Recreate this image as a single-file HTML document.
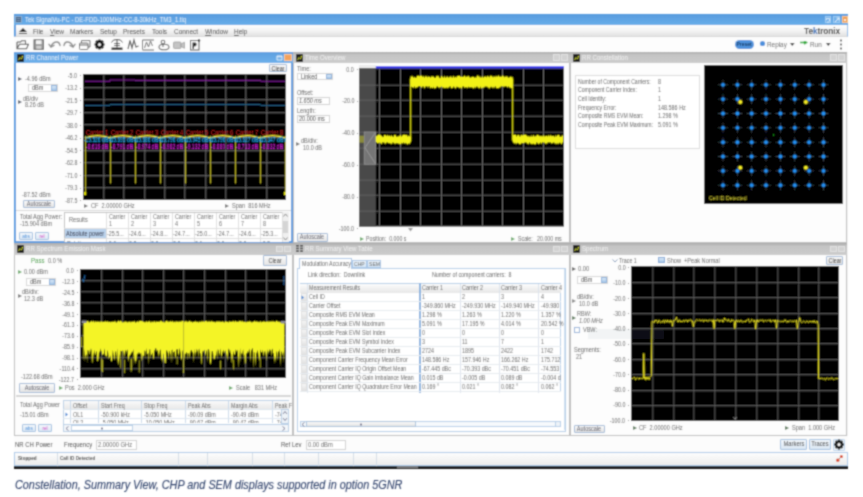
<!DOCTYPE html><html><head><meta charset="utf-8"><style>
html,body{margin:0;padding:0;background:#fff;width:863px;height:497px;overflow:hidden;position:relative;font-family:"Liberation Sans",sans-serif;}
.t{position:absolute;white-space:nowrap;}
div{box-sizing:border-box;}
svg{overflow:hidden;}
#root{position:absolute;left:0;top:0;width:863px;height:497px;filter:url(#bl);}
</style></head><body><svg width="0" height="0" style="position:absolute;left:0;top:0"><filter id="bl" x="0" y="0" width="863" height="497" filterUnits="userSpaceOnUse"><feConvolveMatrix order="5" kernelMatrix="0.0001 0.0020 0.0055 0.0020 0.0001 0.0020 0.0422 0.1171 0.0422 0.0020 0.0055 0.1171 0.3248 0.1171 0.0055 0.0020 0.0422 0.1171 0.0422 0.0020 0.0001 0.0020 0.0055 0.0020 0.0001" edgeMode="duplicate"/></filter></svg><div id="root">
<div style="position:absolute;left:14px;top:14px;width:834px;height:455px;background:#f3f3f3;"></div>
<div style="position:absolute;left:14px;top:14px;width:834px;height:11px;background:linear-gradient(#579ade,#68afe9);"></div>
<div class="t" style="left:24.5px;top:14.5px;font-size:7px;line-height:10px;color:#eef5fc;transform-origin:0 50%;transform:scaleX(0.85);">Tek SignalVu-PC - DE-FDD-100MHz-CC-8-30kHz_TM3_1.tiq</div>
<svg style="position:absolute;left:15px;top:15.5px;" width="7" height="7" viewBox="0 0 7 7"><rect x="0.5" y="0.5" width="6" height="6" fill="#3c5c80" stroke="#9ab8d8" stroke-width="0.8"/><path d="M1.5 2.5 H5.5 M1.5 4.5 H5.5" stroke="#a8c0d8" stroke-width="0.6"/></svg>
<div style="position:absolute;left:824.5px;top:15.7px;width:6.5px;height:7.3px;background:#70b0ea;border:1px solid #9ccaf2;"></div>
<svg style="position:absolute;left:825px;top:16.5px;" width="6" height="6" viewBox="0 0 6 6"><path d="M1.5 1.5 H4.5 V4.5 M1.5 1.5 V3 M2 5 H4" stroke="#e8f4fd" stroke-width="0.8" fill="none"/></svg>
<div style="position:absolute;left:833px;top:15.7px;width:6.5px;height:7.3px;background:#70b0ea;border:1px solid #9ccaf2;"></div>
<svg style="position:absolute;left:833.5px;top:16.5px;" width="6" height="6" viewBox="0 0 6 6"><path d="M1 5 L5 1 M2.5 1 H5 V3.5" stroke="#e8f4fd" stroke-width="0.9" fill="none"/></svg>
<div style="position:absolute;left:841.5px;top:15.7px;width:6.5px;height:7.3px;background:#f09c50;border:1px solid #f7c890;"></div>
<svg style="position:absolute;left:842px;top:16.5px;" width="6" height="6" viewBox="0 0 6 6"><rect x="2" y="2" width="2" height="2" fill="#fde8d0"/></svg>
<div style="position:absolute;left:14px;top:25px;width:834px;height:12px;background:linear-gradient(#fefefe,#f4f4f4 50%,#e2e2e2);border-left:2px solid #5a9de0;border-right:1px solid #8fbbe8;border-bottom:1px solid #d8d8d8;"></div>
<svg style="position:absolute;left:19px;top:28px;" width="8" height="6" viewBox="0 0 8 6"><path d="M0 4 L4 0 L8 4 Z M0 5 H8 V6 H0 Z" fill="#222"/></svg>
<div class="t" style="left:33.3px;top:25.5px;font-size:7.6px;line-height:11px;color:#454545;transform-origin:0 50%;transform:scaleX(0.85);">File</div>
<div class="t" style="left:49.5px;top:25.5px;font-size:7.6px;line-height:11px;color:#454545;transform-origin:0 50%;transform:scaleX(0.85);"><u>V</u>iew</div>
<div class="t" style="left:70px;top:25.5px;font-size:7.6px;line-height:11px;color:#454545;transform-origin:0 50%;transform:scaleX(0.85);">Markers</div>
<div class="t" style="left:100px;top:25.5px;font-size:7.6px;line-height:11px;color:#454545;transform-origin:0 50%;transform:scaleX(0.85);">Setup</div>
<div class="t" style="left:123px;top:25.5px;font-size:7.6px;line-height:11px;color:#454545;transform-origin:0 50%;transform:scaleX(0.85);">Presets</div>
<div class="t" style="left:152.3px;top:25.5px;font-size:7.6px;line-height:11px;color:#454545;transform-origin:0 50%;transform:scaleX(0.85);">Tools</div>
<div class="t" style="left:174.4px;top:25.5px;font-size:7.6px;line-height:11px;color:#454545;transform-origin:0 50%;transform:scaleX(0.85);">Connect</div>
<div class="t" style="left:204.5px;top:25.5px;font-size:7.6px;line-height:11px;color:#454545;transform-origin:0 50%;transform:scaleX(0.85);"><u>W</u>indow</div>
<div class="t" style="left:234px;top:25.5px;font-size:7.6px;line-height:11px;color:#454545;transform-origin:0 50%;transform:scaleX(0.85);"><u>H</u>elp</div>
<div class="t" style="right:23.5px;top:25.3px;font-size:9px;line-height:12px;color:#3a3a3a;text-align:right;transform-origin:100% 50%;transform:scaleX(0.92);font-weight:bold;letter-spacing:-0.1px;">Te<span style="color:#3b6fb6">k</span>tronix</div>
<div style="position:absolute;left:14px;top:37px;width:834px;height:15px;background:#fdfdfd;"></div>
<svg style="position:absolute;left:14px;top:37px;" width="200" height="15" viewBox="0 0 200 15">
<g fill="none" stroke="#555" stroke-width="1.1" stroke-linejoin="round">
<path d="M3 5 V11.8 H12.5 L14.5 7.2 H5.5 L3 11.8 M3 5 H6.5 L7.5 3.8 H11.5 V7.2"/>
</g>
<rect x="20" y="2.8" width="9.5" height="9.5" fill="#9a9a9a" stroke="#555" stroke-width="0.9"/><rect x="22" y="3.3" width="5.5" height="3.8" fill="#f4f4f4"/><rect x="22.3" y="8.8" width="5" height="3" fill="#d0d0d0"/>
<g fill="none" stroke="#8a8a8a" stroke-width="1.4" stroke-linecap="round">
<path d="M37 9.5 Q39 4.5 43.5 5 Q45.5 5.5 46 8.5"/><path d="M35 7.3 L37 10 L40 8.3"/>
<path d="M59 9.5 Q57 4.5 52.5 5 Q50.5 5.5 50 8.5"/><path d="M61 7.3 L59 10 L56 8.3"/>
</g>
<g fill="none" stroke="#666" stroke-width="1"><rect x="65.5" y="6" width="8.5" height="6.5" rx="1"/><path d="M67.5 6 V3.5 H76 V10 H74"/><path d="M65.5 8 H74"/></g>
<g transform="translate(85.5,7.5)"><circle r="3.2" fill="none" stroke="#111" stroke-width="2.4"/>
<g stroke="#111" stroke-width="2.2"><path d="M0 -5 V5 M-5 0 H5 M-3.6 -3.6 L3.6 3.6 M-3.6 3.6 L3.6 -3.6"/></g><circle r="1.5" fill="#fff"/></g>
<g fill="none" stroke="#444" stroke-width="1"><path d="M97.5 5.5 Q99 2 103 2.5 M108.5 5.5 Q107 2 103 2.5 M103 3 V10.5 M100 6.5 H106 M100 8.5 H106"/></g><rect x="97.5" y="10.5" width="11" height="2.5" fill="#333"/>
<path d="M114 12 L116 3.5 L118 11 L120 3 L122 10 L124.5 9" fill="none" stroke="#555" stroke-width="1.1"/>
<path d="M128.5 12.5 V3 H140 M130.5 11 L132.5 5 L134.5 10 L136.5 4 L138.5 9 M128.5 13 H140" fill="none" stroke="#666" stroke-width="1"/>
<g fill="none" stroke="#666" stroke-width="1.1"><ellipse cx="150" cy="10" rx="5" ry="2.8"/><circle cx="149" cy="5" r="1.8"/><path d="M149 7 V10"/></g>
<g fill="#c4c4c4" stroke="#999" stroke-width="0.8"><rect x="159.5" y="5" width="7.5" height="6.5" rx="1"/><path d="M167 7 L170.5 5.2 V11.3 L167 9.5 Z"/></g>
<rect x="176.5" y="3.5" width="8.5" height="9.5" fill="none" stroke="#555" stroke-width="1"/><path d="M178.5 5.5 H181.5 Q183 6 182.6 8 Q182 9.5 180 9.5 V11.8 H178.5 Z" fill="#222"/><circle cx="185" cy="3.5" r="1.2" fill="#222"/>
</svg>
<div style="position:absolute;left:734.5px;top:39.8px;width:19px;height:9.2px;background:#4f92dc;border-radius:5px;"></div>
<div class="t" style="left:684px;width:120px;text-align:center;top:39.9px;font-size:5.8px;line-height:9px;color:#163a66;transform-origin:50% 50%;transform:scaleX(0.85);font-weight:bold;">Preset</div>
<svg style="position:absolute;left:759px;top:40px;" width="7" height="7" viewBox="0 0 7 7"><circle cx="3.5" cy="3.5" r="2.6" fill="#4a8fdc"/></svg>
<div class="t" style="left:767px;top:39.5px;font-size:7.5px;line-height:10px;color:#666;transform-origin:0 50%;transform:scaleX(0.85);">Replay</div>
<svg style="position:absolute;left:790px;top:43px;" width="5" height="4" viewBox="0 0 5 4"><path d="M0 0 H4.6 L2.3 3 Z" fill="#333"/></svg>
<svg style="position:absolute;left:800px;top:41px;" width="8" height="5" viewBox="0 0 8 5"><path d="M0 1.5 H6 M4 0 L6.5 1.5 L4 3" stroke="#22aa33" stroke-width="1.6" fill="none"/></svg>
<div class="t" style="left:810px;top:39.7px;font-size:7.5px;line-height:10px;color:#666;transform-origin:0 50%;transform:scaleX(0.85);">Run</div>
<svg style="position:absolute;left:825.5px;top:43px;" width="5" height="4" viewBox="0 0 5 4"><path d="M0 0 H4.6 L2.3 3 Z" fill="#333"/></svg>
<svg style="position:absolute;left:839px;top:39px;" width="4" height="11" viewBox="0 0 4 11"><circle cx="2" cy="1.5" r="1" fill="#333"/><circle cx="2" cy="5.5" r="1" fill="#333"/><circle cx="2" cy="9.5" r="1" fill="#333"/></svg>
<div style="position:absolute;left:14px;top:51.7px;width:279px;height:191.8px;background:#fdfdfd;border:2px solid #5a9de0;border-top:0;"></div>
<div style="position:absolute;left:14px;top:51.7px;width:279px;height:11.2px;background:linear-gradient(#5d9edf,#6cb0ea);"></div>
<svg style="position:absolute;left:16.5px;top:53.7px;" width="7" height="8" viewBox="0 0 7 8"><rect width="7" height="8" rx="1" fill="#1a1a1a"/><path d="M1.5 6 L3 3.5 L4.5 5 L5.8 1.8" stroke="#c8d030" stroke-width="1" fill="none"/></svg>
<div class="t" style="left:26px;top:53.0px;font-size:7.2px;line-height:10px;color:#eef5fc;transform-origin:0 50%;transform:scaleX(0.85);">RR Channel Power</div>
<svg style="position:absolute;left:275.5px;top:54.2px;" width="7" height="7" viewBox="0 0 7 7"><path d="M1 2 H6 V6 H1 Z M1 2.8 H6" stroke="#eef6fd" stroke-width="0.9" fill="none"/></svg>
<div style="position:absolute;left:284px;top:53.7px;width:7.5px;height:7.5px;background:#f3a15a;border:1px solid #f8c89a;"></div>
<div style="position:absolute;left:293px;top:51.7px;width:277px;height:191.8px;background:#fdfdfd;border:1px solid #bdbdbd;border-top:0;"></div>
<div style="position:absolute;left:293px;top:51.7px;width:277px;height:11.2px;background:linear-gradient(#a9a9a9,#c4c4c4 25%,#cbcbcb);"></div>
<svg style="position:absolute;left:295.5px;top:53.7px;" width="7" height="8" viewBox="0 0 7 8"><rect width="7" height="8" rx="1" fill="#1a1a1a"/><path d="M1.5 6 L3 3.5 L4.5 5 L5.8 1.8" stroke="#c8d030" stroke-width="1" fill="none"/></svg>
<div class="t" style="left:305px;top:53.0px;font-size:7.2px;line-height:10px;color:#f4f4f4;transform-origin:0 50%;transform:scaleX(0.85);">Time Overview</div>
<div style="position:absolute;left:553px;top:54.2px;width:6.5px;height:6.5px;background:#d2d2d2;border:1px solid #e2e2e2;"></div>
<div style="position:absolute;left:561px;top:54.2px;width:6.5px;height:6.5px;background:#d2d2d2;border:1px solid #e2e2e2;"></div>
<div style="position:absolute;left:570px;top:51.7px;width:277px;height:191.8px;background:#fdfdfd;border:1px solid #bdbdbd;border-top:0;"></div>
<div style="position:absolute;left:570px;top:51.7px;width:277px;height:11.2px;background:linear-gradient(#a9a9a9,#c4c4c4 25%,#cbcbcb);"></div>
<svg style="position:absolute;left:572.5px;top:53.7px;" width="7" height="8" viewBox="0 0 7 8"><rect width="7" height="8" rx="1" fill="#1a1a1a"/><path d="M1.5 6 L3 3.5 L4.5 5 L5.8 1.8" stroke="#c8d030" stroke-width="1" fill="none"/></svg>
<div class="t" style="left:582px;top:53.0px;font-size:7.2px;line-height:10px;color:#f4f4f4;transform-origin:0 50%;transform:scaleX(0.85);">RR Constellation</div>
<div style="position:absolute;left:830px;top:54.2px;width:6.5px;height:6.5px;background:#d2d2d2;border:1px solid #e2e2e2;"></div>
<div style="position:absolute;left:838px;top:54.2px;width:6.5px;height:6.5px;background:#d2d2d2;border:1px solid #e2e2e2;"></div>
<div style="position:absolute;left:14px;top:243.1px;width:279px;height:192.9px;background:#fdfdfd;border:1px solid #bdbdbd;border-top:0;"></div>
<div style="position:absolute;left:14px;top:243.1px;width:279px;height:11.7px;background:linear-gradient(#a9a9a9,#c4c4c4 25%,#cbcbcb);"></div>
<svg style="position:absolute;left:16.5px;top:245.1px;" width="7" height="8" viewBox="0 0 7 8"><rect width="7" height="8" rx="1" fill="#1a1a1a"/><path d="M1.5 6 L3 3.5 L4.5 5 L5.8 1.8" stroke="#c8d030" stroke-width="1" fill="none"/></svg>
<div class="t" style="left:26px;top:244.4px;font-size:7.2px;line-height:10px;color:#f4f4f4;transform-origin:0 50%;transform:scaleX(0.85);">RR Spectrum Emission Mask</div>
<div style="position:absolute;left:276px;top:245.6px;width:6.5px;height:6.5px;background:#d2d2d2;border:1px solid #e2e2e2;"></div>
<div style="position:absolute;left:284px;top:245.6px;width:6.5px;height:6.5px;background:#d2d2d2;border:1px solid #e2e2e2;"></div>
<div style="position:absolute;left:293px;top:243.1px;width:277px;height:192.9px;background:#fdfdfd;border:1px solid #bdbdbd;border-top:0;"></div>
<div style="position:absolute;left:293px;top:243.1px;width:277px;height:11.7px;background:linear-gradient(#a9a9a9,#c4c4c4 25%,#cbcbcb);"></div>
<svg style="position:absolute;left:296px;top:245.1px;" width="7" height="7" viewBox="0 0 7 7"><g fill="#444"><rect x="0" y="0" width="3" height="1.5"/><rect x="4" y="0" width="3" height="1.5"/><rect x="0" y="2.7" width="3" height="1.5"/><rect x="4" y="2.7" width="3" height="1.5"/><rect x="0" y="5.4" width="3" height="1.5"/><rect x="4" y="5.4" width="3" height="1.5"/></g></svg>
<div class="t" style="left:305px;top:244.4px;font-size:7.2px;line-height:10px;color:#f4f4f4;transform-origin:0 50%;transform:scaleX(0.85);">RR Summary View Table</div>
<div style="position:absolute;left:553px;top:245.6px;width:6.5px;height:6.5px;background:#d2d2d2;border:1px solid #e2e2e2;"></div>
<div style="position:absolute;left:561px;top:245.6px;width:6.5px;height:6.5px;background:#d2d2d2;border:1px solid #e2e2e2;"></div>
<div style="position:absolute;left:570px;top:243.1px;width:277px;height:192.9px;background:#fdfdfd;border:1px solid #bdbdbd;border-top:0;"></div>
<div style="position:absolute;left:570px;top:243.1px;width:277px;height:11.7px;background:linear-gradient(#a9a9a9,#c4c4c4 25%,#cbcbcb);"></div>
<svg style="position:absolute;left:572.5px;top:245.1px;" width="7" height="8" viewBox="0 0 7 8"><rect width="7" height="8" rx="1" fill="#1a1a1a"/><path d="M1.5 6 L3 3.5 L4.5 5 L5.8 1.8" stroke="#c8d030" stroke-width="1" fill="none"/></svg>
<div class="t" style="left:582px;top:244.4px;font-size:7.2px;line-height:10px;color:#f4f4f4;transform-origin:0 50%;transform:scaleX(0.85);">Spectrum</div>
<div style="position:absolute;left:830px;top:245.6px;width:6.5px;height:6.5px;background:#d2d2d2;border:1px solid #e2e2e2;"></div>
<div style="position:absolute;left:838px;top:245.6px;width:6.5px;height:6.5px;background:#d2d2d2;border:1px solid #e2e2e2;"></div>
<div style="position:absolute;left:269.4px;top:64.4px;width:17.600000000000023px;height:7.3999999999999915px;background:linear-gradient(#fbfbfb,#e4e4e4);border:1px solid #9fb8d6;border-radius:1px;"></div>
<div class="t" style="left:218.2px;width:120px;text-align:center;top:63.6px;font-size:6.3px;line-height:9px;color:#333;transform-origin:50% 50%;transform:scaleX(0.85);">Clear</div>
<svg style="position:absolute;left:18px;top:76.6px;" width="4" height="4" viewBox="0 0 4 4"><path d="M0 0 L4 2 L0 4 Z" fill="#505a6a"/></svg>
<div class="t" style="left:25px;top:73.6px;font-size:6.5px;line-height:10px;color:#5e5e5e;transform-origin:0 50%;transform:scaleX(0.85);">-4.96 dBm</div>
<div style="position:absolute;left:28px;top:84.2px;width:30px;height:8.099999999999994px;background:#fff;border:1px solid #d6d6d6;"></div>
<div class="t" style="left:32px;top:83.2px;font-size:6.5px;line-height:10px;color:#444;transform-origin:0 50%;transform:scaleX(0.85);">dBm</div>
<div style="position:absolute;left:51px;top:85.2px;width:6px;height:6.099999999999994px;background:linear-gradient(#d9e8f7,#a9c9ea);border:1px solid #8db3dc;"></div>
<svg style="position:absolute;left:18px;top:100px;" width="4" height="4" viewBox="0 0 4 4"><path d="M0 0 L4 2 L0 4 Z" fill="#505a6a"/></svg>
<div class="t" style="left:23px;top:93.9px;font-size:6.3px;line-height:9px;color:#5e5e5e;transform-origin:0 50%;transform:scaleX(0.85);">dB/div</div>
<div class="t" style="left:25px;top:100.4px;font-size:6.5px;line-height:10px;color:#5e5e5e;transform-origin:0 50%;transform:scaleX(0.85);">8.26 dB</div>
<div class="t" style="right:786px;top:70.5px;font-size:6.3px;line-height:9px;color:#5e5e5e;text-align:right;transform-origin:100% 50%;transform:scaleX(0.85);">-5.0</div>
<div style="position:absolute;left:79.5px;top:75px;width:1.5px;height:1px;background:#888;"></div>
<div class="t" style="right:786px;top:83.0px;font-size:6.3px;line-height:9px;color:#5e5e5e;text-align:right;transform-origin:100% 50%;transform:scaleX(0.85);">-13.2</div>
<div style="position:absolute;left:79.5px;top:88px;width:1.5px;height:1px;background:#888;"></div>
<div class="t" style="right:786px;top:95.5px;font-size:6.3px;line-height:9px;color:#5e5e5e;text-align:right;transform-origin:100% 50%;transform:scaleX(0.85);">-21.5</div>
<div style="position:absolute;left:79.5px;top:100px;width:1.5px;height:1px;background:#888;"></div>
<div class="t" style="right:786px;top:108.0px;font-size:6.3px;line-height:9px;color:#5e5e5e;text-align:right;transform-origin:100% 50%;transform:scaleX(0.85);">-29.7</div>
<div style="position:absolute;left:79.5px;top:112px;width:1.5px;height:1px;background:#888;"></div>
<div class="t" style="right:786px;top:120.5px;font-size:6.3px;line-height:9px;color:#5e5e5e;text-align:right;transform-origin:100% 50%;transform:scaleX(0.85);">-38.0</div>
<div style="position:absolute;left:79.5px;top:125px;width:1.5px;height:1px;background:#888;"></div>
<div class="t" style="right:786px;top:133.0px;font-size:6.3px;line-height:9px;color:#5e5e5e;text-align:right;transform-origin:100% 50%;transform:scaleX(0.85);">-46.2</div>
<div style="position:absolute;left:79.5px;top:138px;width:1.5px;height:1px;background:#888;"></div>
<div class="t" style="right:786px;top:145.5px;font-size:6.3px;line-height:9px;color:#5e5e5e;text-align:right;transform-origin:100% 50%;transform:scaleX(0.85);">-54.5</div>
<div style="position:absolute;left:79.5px;top:150px;width:1.5px;height:1px;background:#888;"></div>
<div class="t" style="right:786px;top:158.0px;font-size:6.3px;line-height:9px;color:#5e5e5e;text-align:right;transform-origin:100% 50%;transform:scaleX(0.85);">-62.8</div>
<div style="position:absolute;left:79.5px;top:162px;width:1.5px;height:1px;background:#888;"></div>
<div class="t" style="right:786px;top:170.5px;font-size:6.3px;line-height:9px;color:#5e5e5e;text-align:right;transform-origin:100% 50%;transform:scaleX(0.85);">-71.0</div>
<div style="position:absolute;left:79.5px;top:175px;width:1.5px;height:1px;background:#888;"></div>
<div class="t" style="right:786px;top:183.0px;font-size:6.3px;line-height:9px;color:#5e5e5e;text-align:right;transform-origin:100% 50%;transform:scaleX(0.85);">-79.3</div>
<div style="position:absolute;left:79.5px;top:188px;width:1.5px;height:1px;background:#888;"></div>
<div class="t" style="right:786px;top:195.5px;font-size:6.3px;line-height:9px;color:#5e5e5e;text-align:right;transform-origin:100% 50%;transform:scaleX(0.85);">-87.5</div>
<div style="position:absolute;left:79.5px;top:200px;width:1.5px;height:1px;background:#888;"></div>
<svg style="position:absolute;left:82.6px;top:73.7px;" width="203.7" height="126" viewBox="0 0 203.7 126"><rect width="100%" height="100%" fill="#000"/><path d="M20.90 0 V126" stroke="#707070" stroke-width="1"/><path d="M40.90 0 V126" stroke="#707070" stroke-width="1"/><path d="M61.90 0 V126" stroke="#707070" stroke-width="1"/><path d="M81.90 0 V126" stroke="#707070" stroke-width="1"/><path d="M101.90 0 V126" stroke="#707070" stroke-width="1"/><path d="M122.90 0 V126" stroke="#707070" stroke-width="1"/><path d="M142.90 0 V126" stroke="#707070" stroke-width="1"/><path d="M162.90 0 V126" stroke="#707070" stroke-width="1"/><path d="M183.90 0 V126" stroke="#707070" stroke-width="1"/><path d="M0 13.80 H203.7" stroke="#707070" stroke-width="1"/><path d="M0 25.80 H203.7" stroke="#707070" stroke-width="1"/><path d="M0 38.80 H203.7" stroke="#707070" stroke-width="1"/><path d="M0 50.80 H203.7" stroke="#707070" stroke-width="1"/><path d="M0 63.80 H203.7" stroke="#707070" stroke-width="1"/><path d="M0 76.80 H203.7" stroke="#707070" stroke-width="1"/><path d="M0 88.80 H203.7" stroke="#707070" stroke-width="1"/><path d="M0 101.80 H203.7" stroke="#707070" stroke-width="1"/><path d="M0 113.80 H203.7" stroke="#707070" stroke-width="1"/><path d="M2 7.2 H27 V6 H52 V6.3 H177.6 V7.2 H203" stroke="#8a22a4" stroke-width="1" fill="none"/><path d="M2 31.4 H27 V30.6 H177.6 V31.4 H203" stroke="#1f5f88" stroke-width="1" fill="none"/><path d="M2 64 Q14.5 59.5 27 64 M27 64 Q39.5 59.5 52 64 M52 64 Q64.5 59.5 77 64 M77 64 Q89.5 59.5 102 64 M102 64 Q114.5 59.5 127 64 M127 64 Q139.5 59.5 152 64 M152 64 Q164.5 59.5 177 64 M177 64 Q189.5 59.5 202 64 " stroke="#e8e030" stroke-width="1.4" fill="none"/><path d="M2.5 62 V120" stroke="#c0b828" stroke-width="0.9"/><path d="M27.5 62 V109.5" stroke="#c0b828" stroke-width="0.9"/><path d="M52.5 62 V109.5" stroke="#c0b828" stroke-width="0.9"/><path d="M77.5 62 V109.5" stroke="#c0b828" stroke-width="0.9"/><path d="M102.5 62 V109.5" stroke="#c0b828" stroke-width="0.9"/><path d="M127.5 62 V109.5" stroke="#c0b828" stroke-width="0.9"/><path d="M152.5 62 V109.5" stroke="#c0b828" stroke-width="0.9"/><path d="M177.5 62 V109.5" stroke="#c0b828" stroke-width="0.9"/><path d="M202.5 62 V120" stroke="#c0b828" stroke-width="0.9"/><rect x="1" y="118" width="2.2" height="3" fill="#dd0"/><rect x="201" y="118" width="2.2" height="3" fill="#dd0"/></svg>
<div style="position:absolute;left:82.6px;top:73.7px;width:203px;height:126px;overflow:hidden;">
<div class="t" style="left:3px;top:55.5px;font-size:6.6px;line-height:8px;color:#e02020;transform:scaleX(0.86);transform-origin:0 50%;">Carrier 1</div>
<div class="t" style="left:28px;top:55.5px;font-size:6.6px;line-height:8px;color:#e02020;transform:scaleX(0.86);transform-origin:0 50%;">Carrier 2</div>
<div class="t" style="left:53px;top:55.5px;font-size:6.6px;line-height:8px;color:#e02020;transform:scaleX(0.86);transform-origin:0 50%;">Carrier 3</div>
<div class="t" style="left:78px;top:55.5px;font-size:6.6px;line-height:8px;color:#e02020;transform:scaleX(0.86);transform-origin:0 50%;">Carrier 4</div>
<div class="t" style="left:103px;top:55.5px;font-size:6.6px;line-height:8px;color:#e02020;transform:scaleX(0.86);transform-origin:0 50%;">Carrier 5</div>
<div class="t" style="left:128px;top:55.5px;font-size:6.6px;line-height:8px;color:#e02020;transform:scaleX(0.86);transform-origin:0 50%;">Carrier 6</div>
<div class="t" style="left:153px;top:55.5px;font-size:6.6px;line-height:8px;color:#e02020;transform:scaleX(0.86);transform-origin:0 50%;">Carrier 7</div>
<div class="t" style="left:178px;top:55.5px;font-size:6.6px;line-height:8px;color:#e02020;transform:scaleX(0.86);transform-origin:0 50%;">Carrier 8</div>
<div class="t" style="left:1px;top:62.5px;font-size:6.6px;line-height:8px;color:#20a0e0;font-weight:bold;transform:scaleX(0.74);transform-origin:0 50%;">-15.526 dBm</div>
<div class="t" style="left:3px;top:69.5px;font-size:6.6px;line-height:8px;color:#c020c8;font-weight:bold;transform:scaleX(0.76);transform-origin:0 50%;">-8.616 dB</div>
<div class="t" style="left:26px;top:62.5px;font-size:6.6px;line-height:8px;color:#20a0e0;font-weight:bold;transform:scaleX(0.74);transform-origin:0 50%;">-15.695 dBm</div>
<div class="t" style="left:28px;top:69.5px;font-size:6.6px;line-height:8px;color:#c020c8;font-weight:bold;transform:scaleX(0.76);transform-origin:0 50%;">-8.791 dB</div>
<div class="t" style="left:51px;top:62.5px;font-size:6.6px;line-height:8px;color:#20a0e0;font-weight:bold;transform:scaleX(0.74);transform-origin:0 50%;">-15.686 dBm</div>
<div class="t" style="left:53px;top:69.5px;font-size:6.6px;line-height:8px;color:#c020c8;font-weight:bold;transform:scaleX(0.76);transform-origin:0 50%;">-8.974 dB</div>
<div class="t" style="left:76px;top:62.5px;font-size:6.6px;line-height:8px;color:#20a0e0;font-weight:bold;transform:scaleX(0.74);transform-origin:0 50%;">-15.796 dBm</div>
<div class="t" style="left:78px;top:69.5px;font-size:6.6px;line-height:8px;color:#c020c8;font-weight:bold;transform:scaleX(0.76);transform-origin:0 50%;">-8.982 dB</div>
<div class="t" style="left:101px;top:62.5px;font-size:6.6px;line-height:8px;color:#20a0e0;font-weight:bold;transform:scaleX(0.74);transform-origin:0 50%;">-15.045 dBm</div>
<div class="t" style="left:103px;top:69.5px;font-size:6.6px;line-height:8px;color:#c020c8;font-weight:bold;transform:scaleX(0.76);transform-origin:0 50%;">-9.132 dB</div>
<div class="t" style="left:126px;top:62.5px;font-size:6.6px;line-height:8px;color:#20a0e0;font-weight:bold;transform:scaleX(0.74);transform-origin:0 50%;">-15.796 dBm</div>
<div class="t" style="left:128px;top:69.5px;font-size:6.6px;line-height:8px;color:#c020c8;font-weight:bold;transform:scaleX(0.76);transform-origin:0 50%;">-8.880 dB</div>
<div class="t" style="left:151px;top:62.5px;font-size:6.6px;line-height:8px;color:#20a0e0;font-weight:bold;transform:scaleX(0.74);transform-origin:0 50%;">-15.627 dBm</div>
<div class="t" style="left:153px;top:69.5px;font-size:6.6px;line-height:8px;color:#c020c8;font-weight:bold;transform:scaleX(0.76);transform-origin:0 50%;">-8.713 dB</div>
<div class="t" style="left:176px;top:62.5px;font-size:6.6px;line-height:8px;color:#20a0e0;font-weight:bold;transform:scaleX(0.74);transform-origin:0 50%;">-15.347 dBm</div>
<div class="t" style="left:178px;top:69.5px;font-size:6.6px;line-height:8px;color:#c020c8;font-weight:bold;transform:scaleX(0.76);transform-origin:0 50%;">-8.832 dB</div>
</div>
<div class="t" style="left:22px;top:189.6px;font-size:6.5px;line-height:10px;color:#5e5e5e;transform-origin:0 50%;transform:scaleX(0.85);">-87.52 dBm</div>
<div style="position:absolute;left:23px;top:199.9px;width:31.6px;height:8.099999999999994px;background:linear-gradient(#fbfbfb,#e4e4e4);border:1px solid #9fb8d6;border-radius:1px;"></div>
<div class="t" style="left:-21.200000000000003px;width:120px;text-align:center;top:198.9px;font-size:6.5px;line-height:10px;color:#5a5a66;transform-origin:50% 50%;transform:scaleX(0.85);">Autoscale</div>
<svg style="position:absolute;left:84px;top:204px;" width="4" height="4" viewBox="0 0 4 4"><path d="M0 0 L4 2 L0 4 Z" fill="#777"/></svg>
<div class="t" style="left:91px;top:201.0px;font-size:6.6px;line-height:10px;color:#5e5e5e;transform-origin:0 50%;transform:scaleX(0.85);">CF&nbsp; 2.00000 GHz</div>
<svg style="position:absolute;left:225px;top:204px;" width="4" height="4" viewBox="0 0 4 4"><path d="M0 0 L4 2 L0 4 Z" fill="#777"/></svg>
<div class="t" style="left:232px;top:201.0px;font-size:6.6px;line-height:10px;color:#5e5e5e;transform-origin:0 50%;transform:scaleX(0.85);">Span&nbsp; 816 MHz</div>
<div style="position:absolute;left:16px;top:210px;width:275px;height:1px;background:#d8d8d8;"></div>
<div class="t" style="left:20px;top:211.9px;font-size:6.6px;line-height:10px;color:#5e5e5e;transform-origin:0 50%;transform:scaleX(0.85);">Total Agg Power:</div>
<div class="t" style="left:20px;top:219.0px;font-size:6.6px;line-height:10px;color:#5e5e5e;transform-origin:0 50%;transform:scaleX(0.85);">-15.904 dBm</div>
<div style="position:absolute;left:19px;top:232px;width:13.5px;height:8.300000000000011px;background:linear-gradient(#f4f8fc,#dde9f5);border:1px solid #9fbfe0;border-radius:1px;"></div>
<div class="t" style="left:-34.25px;width:120px;text-align:center;top:232.2px;font-size:5.5px;line-height:8px;color:#4a8fd8;transform-origin:50% 50%;transform:scaleX(0.85);">abs</div>
<div style="position:absolute;left:35px;top:232px;width:13.5px;height:8.300000000000011px;background:linear-gradient(#f4f8fc,#dde9f5);border:1px solid #9fbfe0;border-radius:1px;"></div>
<div class="t" style="left:-18.25px;width:120px;text-align:center;top:232.2px;font-size:5.5px;line-height:8px;color:#d040c0;transform-origin:50% 50%;transform:scaleX(0.85);">rel</div>
<div style="position:absolute;left:64.3px;top:212px;width:225px;height:29.5px;background:#fff;border:1px solid #c0c0c0;border-bottom:0;"></div>
<div style="position:absolute;left:105.7px;top:212.5px;width:1px;height:29px;background:#dedede;"></div>
<div style="position:absolute;left:127.6px;top:212.5px;width:1px;height:29px;background:#dedede;"></div>
<div style="position:absolute;left:149.6px;top:212.5px;width:1px;height:29px;background:#dedede;"></div>
<div style="position:absolute;left:171.7px;top:212.5px;width:1px;height:29px;background:#dedede;"></div>
<div style="position:absolute;left:193.5px;top:212.5px;width:1px;height:29px;background:#dedede;"></div>
<div style="position:absolute;left:215.7px;top:212.5px;width:1px;height:29px;background:#dedede;"></div>
<div style="position:absolute;left:237.8px;top:212.5px;width:1px;height:29px;background:#dedede;"></div>
<div style="position:absolute;left:259.5px;top:212.5px;width:1px;height:29px;background:#dedede;"></div>
<div style="position:absolute;left:282px;top:212.5px;width:1px;height:29px;background:#dedede;"></div>
<div style="position:absolute;left:64.3px;top:228.2px;width:218px;height:1px;background:#dedede;"></div>
<div style="position:absolute;left:64.3px;top:238.4px;width:218px;height:1px;background:#dedede;"></div>
<div class="t" style="left:69px;top:215.3px;font-size:6.6px;line-height:10px;color:#5e5e5e;transform-origin:0 50%;transform:scaleX(0.85);">Results</div>
<div class="t" style="left:108.7px;top:212.3px;font-size:6.3px;line-height:9px;color:#666;transform-origin:0 50%;transform:scaleX(0.85);">Carrier</div>
<div class="t" style="left:108.7px;top:218.8px;font-size:6.5px;line-height:10px;color:#666;transform-origin:0 50%;transform:scaleX(0.85);">1</div>
<div class="t" style="left:130.6px;top:212.3px;font-size:6.3px;line-height:9px;color:#666;transform-origin:0 50%;transform:scaleX(0.85);">Carrier</div>
<div class="t" style="left:130.6px;top:218.8px;font-size:6.5px;line-height:10px;color:#666;transform-origin:0 50%;transform:scaleX(0.85);">2</div>
<div class="t" style="left:152.6px;top:212.3px;font-size:6.3px;line-height:9px;color:#666;transform-origin:0 50%;transform:scaleX(0.85);">Carrier</div>
<div class="t" style="left:152.6px;top:218.8px;font-size:6.5px;line-height:10px;color:#666;transform-origin:0 50%;transform:scaleX(0.85);">3</div>
<div class="t" style="left:174.7px;top:212.3px;font-size:6.3px;line-height:9px;color:#666;transform-origin:0 50%;transform:scaleX(0.85);">Carrier</div>
<div class="t" style="left:174.7px;top:218.8px;font-size:6.5px;line-height:10px;color:#666;transform-origin:0 50%;transform:scaleX(0.85);">4</div>
<div class="t" style="left:196.5px;top:212.3px;font-size:6.3px;line-height:9px;color:#666;transform-origin:0 50%;transform:scaleX(0.85);">Carrier</div>
<div class="t" style="left:196.5px;top:218.8px;font-size:6.5px;line-height:10px;color:#666;transform-origin:0 50%;transform:scaleX(0.85);">5</div>
<div class="t" style="left:218.7px;top:212.3px;font-size:6.3px;line-height:9px;color:#666;transform-origin:0 50%;transform:scaleX(0.85);">Carrier</div>
<div class="t" style="left:218.7px;top:218.8px;font-size:6.5px;line-height:10px;color:#666;transform-origin:0 50%;transform:scaleX(0.85);">6</div>
<div class="t" style="left:240.8px;top:212.3px;font-size:6.3px;line-height:9px;color:#666;transform-origin:0 50%;transform:scaleX(0.85);">Carrier</div>
<div class="t" style="left:240.8px;top:218.8px;font-size:6.5px;line-height:10px;color:#666;transform-origin:0 50%;transform:scaleX(0.85);">7</div>
<div class="t" style="left:262.5px;top:212.3px;font-size:6.3px;line-height:9px;color:#666;transform-origin:0 50%;transform:scaleX(0.85);">Carrier</div>
<div class="t" style="left:262.5px;top:218.8px;font-size:6.5px;line-height:10px;color:#666;transform-origin:0 50%;transform:scaleX(0.85);">8</div>
<div style="position:absolute;left:65px;top:228.8px;width:40.5px;height:9.5px;background:#b9d2ec;"></div>
<div class="t" style="left:66px;top:228.5px;font-size:6.5px;line-height:10px;color:#334;transform-origin:0 50%;transform:scaleX(0.85);">Absolute power</div>
<div class="t" style="left:106.7px;top:229.0px;font-size:6.3px;line-height:9px;color:#5e5e5e;transform-origin:0 50%;transform:scaleX(0.85);">-25.5...</div>
<div class="t" style="left:128.6px;top:229.0px;font-size:6.3px;line-height:9px;color:#5e5e5e;transform-origin:0 50%;transform:scaleX(0.85);">-24.6...</div>
<div class="t" style="left:150.6px;top:229.0px;font-size:6.3px;line-height:9px;color:#5e5e5e;transform-origin:0 50%;transform:scaleX(0.85);">-24.8...</div>
<div class="t" style="left:172.7px;top:229.0px;font-size:6.3px;line-height:9px;color:#5e5e5e;transform-origin:0 50%;transform:scaleX(0.85);">-24.7...</div>
<div class="t" style="left:194.5px;top:229.0px;font-size:6.3px;line-height:9px;color:#5e5e5e;transform-origin:0 50%;transform:scaleX(0.85);">-25.0...</div>
<div class="t" style="left:216.7px;top:229.0px;font-size:6.3px;line-height:9px;color:#5e5e5e;transform-origin:0 50%;transform:scaleX(0.85);">-24.7...</div>
<div class="t" style="left:238.8px;top:229.0px;font-size:6.3px;line-height:9px;color:#5e5e5e;transform-origin:0 50%;transform:scaleX(0.85);">-24.6...</div>
<div class="t" style="left:260.5px;top:229.0px;font-size:6.3px;line-height:9px;color:#5e5e5e;transform-origin:0 50%;transform:scaleX(0.85);">-25.3...</div>
<div style="position:absolute;left:64.5px;top:239px;width:218px;height:2.8px;overflow:hidden;">
<div class="t" style="left:2px;top:0px;font-size:6.3px;line-height:9px;color:#555;transform:scaleX(0.85);transform-origin:0 50%;">Relative power</div>
<div class="t" style="left:42.2px;top:0px;font-size:6.3px;line-height:9px;color:#555;transform:scaleX(0.85);transform-origin:0 50%;">-0.6...</div>
<div class="t" style="left:64.1px;top:0px;font-size:6.3px;line-height:9px;color:#555;transform:scaleX(0.85);transform-origin:0 50%;">0.2...</div>
<div class="t" style="left:86.1px;top:0px;font-size:6.3px;line-height:9px;color:#555;transform:scaleX(0.85);transform-origin:0 50%;">0.0...</div>
<div class="t" style="left:108.19999999999999px;top:0px;font-size:6.3px;line-height:9px;color:#555;transform:scaleX(0.85);transform-origin:0 50%;">0.0...</div>
<div class="t" style="left:130.0px;top:0px;font-size:6.3px;line-height:9px;color:#555;transform:scaleX(0.85);transform-origin:0 50%;">0.1...</div>
<div class="t" style="left:152.2px;top:0px;font-size:6.3px;line-height:9px;color:#555;transform:scaleX(0.85);transform-origin:0 50%;">0.0...</div>
<div class="t" style="left:174.3px;top:0px;font-size:6.3px;line-height:9px;color:#555;transform:scaleX(0.85);transform-origin:0 50%;">0.0...</div>
<div class="t" style="left:196.0px;top:0px;font-size:6.3px;line-height:9px;color:#555;transform:scaleX(0.85);transform-origin:0 50%;">-0.5...</div>
</div>
<div style="position:absolute;left:282px;top:212px;width:7px;height:29.5px;background:#f0f0f0;border-left:1px solid #ddd;"></div>
<div style="position:absolute;left:283px;top:221px;width:5px;height:12px;background:#d4d4d4;"></div>
<svg style="position:absolute;left:283px;top:213px;" width="5" height="4" viewBox="0 0 5 4"><path d="M0.5 3.5 L2.5 1 L4.5 3.5" stroke="#666" fill="none" stroke-width="0.8"/></svg>
<svg style="position:absolute;left:283px;top:237px;" width="5" height="4" viewBox="0 0 5 4"><path d="M0.5 0.5 L2.5 3 L4.5 0.5" stroke="#666" fill="none" stroke-width="0.8"/></svg>
<div class="t" style="left:297px;top:63.5px;font-size:6.6px;line-height:10px;color:#5e5e5e;transform-origin:0 50%;transform:scaleX(0.85);">Time:</div>
<div style="position:absolute;left:297px;top:72.8px;width:36px;height:7.700000000000003px;background:#fff;border:1px solid #d6d6d6;"></div>
<div class="t" style="left:301px;top:71.7px;font-size:6.5px;line-height:10px;color:#444;transform-origin:0 50%;transform:scaleX(0.85);">Linked</div>
<div style="position:absolute;left:326px;top:73.8px;width:6px;height:5.700000000000003px;background:linear-gradient(#d9e8f7,#a9c9ea);border:1px solid #8db3dc;"></div>
<div class="t" style="left:297px;top:87.5px;font-size:6.6px;line-height:10px;color:#5e5e5e;transform-origin:0 50%;transform:scaleX(0.85);">Offset:</div>
<div style="position:absolute;left:297px;top:96.5px;width:33px;height:8.0px;background:#fff;border:1px solid #d0d0d0;"></div>
<div class="t" style="left:299px;top:95.5px;font-size:6.5px;line-height:10px;color:#444;transform-origin:0 50%;transform:scaleX(0.85);font-style:italic;">1.650 ms</div>
<div class="t" style="left:297px;top:106.0px;font-size:6.6px;line-height:10px;color:#5e5e5e;transform-origin:0 50%;transform:scaleX(0.85);">Length:</div>
<div style="position:absolute;left:297px;top:115px;width:33px;height:8px;background:#fff;border:1px solid #d0d0d0;"></div>
<div class="t" style="left:299px;top:114.0px;font-size:6.5px;line-height:10px;color:#444;transform-origin:0 50%;transform:scaleX(0.85);">20.000 ms</div>
<svg style="position:absolute;left:296px;top:142px;" width="4" height="4" viewBox="0 0 4 4"><path d="M0 0 L4 2 L0 4 Z" fill="#777"/></svg>
<div class="t" style="left:301px;top:136.0px;font-size:6.5px;line-height:10px;color:#5e5e5e;transform-origin:0 50%;transform:scaleX(0.85);">dB/div:</div>
<div class="t" style="left:303px;top:143.0px;font-size:6.5px;line-height:10px;color:#5e5e5e;transform-origin:0 50%;transform:scaleX(0.85);">10.0 dB</div>
<div class="t" style="right:509px;top:64.5px;font-size:6.3px;line-height:9px;color:#5e5e5e;text-align:right;transform-origin:100% 50%;transform:scaleX(0.85);">0.0</div>
<div style="position:absolute;left:356.5px;top:69px;width:1.5px;height:1px;background:#888;"></div>
<div class="t" style="right:509px;top:96.4px;font-size:6.3px;line-height:9px;color:#5e5e5e;text-align:right;transform-origin:100% 50%;transform:scaleX(0.85);">-20.0</div>
<div style="position:absolute;left:356.5px;top:101px;width:1.5px;height:1px;background:#888;"></div>
<div class="t" style="right:509px;top:128.3px;font-size:6.3px;line-height:9px;color:#5e5e5e;text-align:right;transform-origin:100% 50%;transform:scaleX(0.85);">-40.0</div>
<div style="position:absolute;left:356.5px;top:133px;width:1.5px;height:1px;background:#888;"></div>
<div class="t" style="right:509px;top:160.2px;font-size:6.3px;line-height:9px;color:#5e5e5e;text-align:right;transform-origin:100% 50%;transform:scaleX(0.85);">-60.0</div>
<div style="position:absolute;left:356.5px;top:165px;width:1.5px;height:1px;background:#888;"></div>
<div class="t" style="right:509px;top:192.1px;font-size:6.3px;line-height:9px;color:#5e5e5e;text-align:right;transform-origin:100% 50%;transform:scaleX(0.85);">-80.0</div>
<div style="position:absolute;left:356.5px;top:197px;width:1.5px;height:1px;background:#888;"></div>
<div class="t" style="right:509px;top:224.0px;font-size:6.3px;line-height:9px;color:#5e5e5e;text-align:right;transform-origin:100% 50%;transform:scaleX(0.85);">-100.0</div>
<div style="position:absolute;left:356.5px;top:228px;width:1.5px;height:1px;background:#888;"></div>
<svg style="position:absolute;left:359px;top:65.3px;" width="205" height="161.5" viewBox="0 0 205 161.5"><rect x="0" y="3.3" width="205" height="158.2" fill="#000"/><rect x="0" y="0" width="16.8" height="3.3" fill="#ececec"/><rect x="0" y="3.3" width="16.8" height="158.2" fill="#4a4a4a"/><path d="M20.50 3.3 V161.5" stroke="#606060" stroke-width="1"/><path d="M41.50 3.3 V161.5" stroke="#606060" stroke-width="1"/><path d="M61.50 3.3 V161.5" stroke="#606060" stroke-width="1"/><path d="M82.50 3.3 V161.5" stroke="#606060" stroke-width="1"/><path d="M102.50 3.3 V161.5" stroke="#606060" stroke-width="1"/><path d="M123.50 3.3 V161.5" stroke="#606060" stroke-width="1"/><path d="M143.50 3.3 V161.5" stroke="#606060" stroke-width="1"/><path d="M164.50 3.3 V161.5" stroke="#606060" stroke-width="1"/><path d="M184.50 3.3 V161.5" stroke="#606060" stroke-width="1"/><path d="M0 20.20 H205" stroke="#606060" stroke-width="1"/><path d="M0 35.20 H205" stroke="#606060" stroke-width="1"/><path d="M0 51.20 H205" stroke="#606060" stroke-width="1"/><path d="M0 67.20 H205" stroke="#606060" stroke-width="1"/><path d="M0 83.20 H205" stroke="#606060" stroke-width="1"/><path d="M0 99.20 H205" stroke="#606060" stroke-width="1"/><path d="M0 115.20 H205" stroke="#606060" stroke-width="1"/><path d="M0 130.20 H205" stroke="#606060" stroke-width="1"/><path d="M0 146.20 H205" stroke="#606060" stroke-width="1"/><rect x="16.8" y="1.3" width="188.2" height="2.1" fill="#2828ee"/><rect x="5.2" y="67.0" width="11.5" height="32.2" fill="#747474" stroke="#9a9a9a" stroke-width="0.7"/><path d="M16.3 67.7 L6 82.7 L16.3 98.5" stroke="#b0b0b0" stroke-width="0.6" fill="none"/><rect x="6" y="67.7" width="10" height="31" fill="none" stroke="#888" stroke-width="0.3" stroke-dasharray="0.6 0.6"/><rect x="0" y="70.7" width="5" height="7" fill="#8a8a3a"/><path d="M16.8 70.3 L17.5 71.3 L18.2 70.9 L18.9 69.6 L19.6 69.5 L20.3 69.6 L21.0 70.6 L21.7 69.8 L22.4 71.2 L23.1 71.1 L23.8 72.2 L24.5 71.9 L25.2 69.8 L25.9 70.3 L26.6 69.9 L27.3 71.2 L28.0 71.0 L28.7 69.6 L29.4 71.4 L30.1 70.3 L30.8 70.7 L31.5 71.7 L32.2 70.1 L32.9 70.9 L33.6 71.5 L34.3 72.2 L35.0 70.6 L35.7 69.8 L36.4 69.5 L37.1 71.6 L37.8 71.9 L38.5 71.4 L39.2 71.1 L39.9 71.8 L40.6 70.8 L41.3 69.6 L42.0 71.3 L42.7 71.8 L43.4 70.5 L44.1 69.5 L44.8 69.9 L45.5 69.6 L46.2 69.8 L46.9 70.5 L47.6 69.6 L48.3 71.0 L49.0 71.8 L49.7 70.2 L50.4 70.4 L51.1 72.2 L51.8 69.9 L51.8 77.5 L51.1 77.3 L50.4 79.4 L49.7 78.0 L49.0 79.3 L48.3 79.4 L47.6 78.1 L46.9 79.3 L46.2 77.5 L45.5 79.0 L44.8 77.2 L44.1 78.1 L43.4 78.7 L42.7 77.6 L42.0 79.7 L41.3 78.8 L40.6 78.7 L39.9 79.5 L39.2 78.1 L38.5 78.5 L37.8 77.7 L37.1 78.5 L36.4 78.7 L35.7 78.2 L35.0 79.0 L34.3 77.2 L33.6 77.6 L32.9 79.3 L32.2 78.5 L31.5 78.8 L30.8 77.7 L30.1 78.5 L29.4 78.1 L28.7 77.4 L28.0 77.0 L27.3 77.9 L26.6 78.5 L25.9 79.2 L25.2 77.2 L24.5 77.7 L23.8 77.0 L23.1 78.0 L22.4 79.5 L21.7 77.5 L21.0 79.2 L20.3 77.1 L19.6 78.1 L18.9 78.3 L18.2 77.9 L17.5 77.0 L16.8 77.3 Z" fill="#f2f218"/><path d="M51.5 11.1 L52.2 12.1 L52.9 10.4 L53.6 11.5 L54.3 13.1 L55.0 11.9 L55.7 12.3 L56.4 13.0 L57.1 12.9 L57.8 11.5 L58.5 10.7 L59.2 10.6 L59.9 11.0 L60.6 11.4 L61.3 10.4 L62.0 10.7 L62.7 10.5 L63.4 12.2 L64.1 11.1 L64.8 11.4 L65.5 12.8 L66.2 11.7 L66.9 10.6 L67.6 11.4 L68.3 12.8 L69.0 10.5 L69.7 11.9 L70.4 12.0 L71.1 11.9 L71.8 12.9 L72.5 11.2 L73.2 10.9 L73.9 11.9 L74.6 11.3 L75.3 12.7 L76.0 12.9 L76.7 12.8 L77.4 11.1 L78.1 11.4 L78.8 10.5 L79.5 11.1 L80.2 13.2 L80.9 13.1 L81.6 13.2 L82.3 11.0 L83.0 11.0 L83.7 12.2 L84.4 12.8 L85.1 12.3 L85.8 10.6 L86.5 13.0 L87.2 12.6 L87.9 10.9 L88.6 11.4 L89.3 13.2 L90.0 11.6 L90.7 12.5 L91.4 10.8 L92.1 13.0 L92.8 10.8 L93.5 13.2 L94.2 11.4 L94.9 10.8 L95.6 13.2 L96.3 11.9 L97.0 11.6 L97.7 12.8 L98.4 11.1 L99.1 11.1 L99.8 11.1 L100.5 10.8 L101.2 11.4 L101.9 12.1 L102.6 11.6 L103.3 11.8 L104.0 11.9 L104.7 11.7 L105.4 10.4 L106.1 10.9 L106.8 12.5 L107.5 11.3 L108.2 12.0 L108.9 10.7 L109.6 11.1 L110.3 12.6 L111.0 12.0 L111.7 13.0 L112.4 12.2 L113.1 11.9 L113.8 11.7 L114.5 11.8 L115.2 12.4 L115.9 13.1 L116.6 12.0 L117.3 12.8 L118.0 10.8 L118.7 10.6 L119.4 10.6 L120.1 12.7 L120.8 10.8 L121.5 12.3 L122.2 12.9 L122.9 11.0 L123.6 11.5 L124.3 13.3 L125.0 10.9 L125.7 11.9 L126.4 11.0 L127.1 12.5 L127.8 12.0 L128.5 10.5 L129.2 12.2 L129.9 10.6 L130.6 12.7 L131.3 10.7 L132.0 10.5 L132.7 11.2 L133.4 11.6 L134.1 12.8 L134.8 10.8 L135.5 12.0 L136.2 10.7 L136.9 12.4 L137.6 10.6 L138.3 12.2 L139.0 10.6 L139.7 10.6 L140.4 11.7 L141.1 12.0 L141.8 11.2 L142.5 11.9 L143.2 10.7 L143.9 10.5 L144.6 11.3 L145.3 12.6 L146.0 11.8 L146.7 11.4 L147.4 11.1 L148.1 12.5 L148.8 10.9 L149.5 13.1 L150.2 12.8 L150.9 11.8 L151.6 11.5 L152.3 12.4 L153.0 11.4 L153.7 12.4 L153.7 22.7 L153.0 23.2 L152.3 23.6 L151.6 22.3 L150.9 23.2 L150.2 22.1 L149.5 21.1 L148.8 22.2 L148.1 22.4 L147.4 20.9 L146.7 20.9 L146.0 21.3 L145.3 21.7 L144.6 21.7 L143.9 21.4 L143.2 21.3 L142.5 21.5 L141.8 21.2 L141.1 23.5 L140.4 21.8 L139.7 23.3 L139.0 23.3 L138.3 23.1 L137.6 23.5 L136.9 22.0 L136.2 21.0 L135.5 22.8 L134.8 23.5 L134.1 21.6 L133.4 23.4 L132.7 21.2 L132.0 23.1 L131.3 21.6 L130.6 23.6 L129.9 23.7 L129.2 22.3 L128.5 21.8 L127.8 22.1 L127.1 20.9 L126.4 21.7 L125.7 21.8 L125.0 22.1 L124.3 23.2 L123.6 22.2 L122.9 23.6 L122.2 23.6 L121.5 21.2 L120.8 22.9 L120.1 23.4 L119.4 22.7 L118.7 21.5 L118.0 22.1 L117.3 21.2 L116.6 23.5 L115.9 21.6 L115.2 23.3 L114.5 23.5 L113.8 22.4 L113.1 22.8 L112.4 22.3 L111.7 22.1 L111.0 23.0 L110.3 22.3 L109.6 21.6 L108.9 22.4 L108.2 23.1 L107.5 22.3 L106.8 22.4 L106.1 22.2 L105.4 23.1 L104.7 21.3 L104.0 20.9 L103.3 22.4 L102.6 23.5 L101.9 23.4 L101.2 22.1 L100.5 23.4 L99.8 22.0 L99.1 22.5 L98.4 21.7 L97.7 21.4 L97.0 23.3 L96.3 23.5 L95.6 22.7 L94.9 20.9 L94.2 22.4 L93.5 22.7 L92.8 23.2 L92.1 23.1 L91.4 21.3 L90.7 21.3 L90.0 23.5 L89.3 22.0 L88.6 23.1 L87.9 23.1 L87.2 22.2 L86.5 23.1 L85.8 22.7 L85.1 23.1 L84.4 22.2 L83.7 23.4 L83.0 21.4 L82.3 21.5 L81.6 21.9 L80.9 23.7 L80.2 22.1 L79.5 22.8 L78.8 21.6 L78.1 20.9 L77.4 22.3 L76.7 23.0 L76.0 23.1 L75.3 23.7 L74.6 21.5 L73.9 23.1 L73.2 23.0 L72.5 21.9 L71.8 22.8 L71.1 23.6 L70.4 20.9 L69.7 21.2 L69.0 23.6 L68.3 21.3 L67.6 21.6 L66.9 21.1 L66.2 22.2 L65.5 23.7 L64.8 21.2 L64.1 21.8 L63.4 21.2 L62.7 23.3 L62.0 21.9 L61.3 21.3 L60.6 21.0 L59.9 21.3 L59.2 21.0 L58.5 22.6 L57.8 22.0 L57.1 23.1 L56.4 23.1 L55.7 21.0 L55.0 22.6 L54.3 22.8 L53.6 22.5 L52.9 22.0 L52.2 21.6 L51.5 22.2 Z" fill="#f2f218"/><path d="M154.0 70.6 L154.7 69.6 L155.4 69.6 L156.1 70.1 L156.8 69.6 L157.5 71.9 L158.2 70.2 L158.9 70.2 L159.6 69.9 L160.3 70.2 L161.0 72.2 L161.7 70.1 L162.4 70.3 L163.1 69.4 L163.8 70.8 L164.5 70.0 L165.2 69.4 L165.9 69.7 L166.6 69.5 L167.3 70.3 L168.0 71.1 L168.7 71.6 L169.4 71.5 L170.1 70.5 L170.8 72.2 L171.5 71.5 L172.2 69.5 L172.9 72.0 L173.6 71.5 L174.3 69.8 L175.0 70.9 L175.7 71.7 L176.4 71.1 L177.1 71.4 L177.8 70.1 L178.5 69.8 L179.2 69.7 L179.9 71.0 L180.6 71.2 L181.3 70.8 L182.0 71.7 L182.7 70.8 L183.4 71.3 L184.1 71.5 L184.8 69.6 L185.5 71.5 L186.2 71.5 L186.9 70.8 L187.6 70.8 L188.3 71.6 L189.0 71.3 L189.7 69.8 L190.4 71.5 L191.1 71.0 L191.8 69.6 L192.5 71.3 L193.2 71.3 L193.9 70.9 L194.6 70.7 L195.3 72.0 L196.0 72.2 L196.7 69.5 L197.4 71.8 L198.1 70.7 L198.8 70.0 L199.5 70.0 L200.2 69.8 L200.9 72.1 L201.6 71.8 L202.3 72.0 L203.0 70.1 L203.7 70.8 L204.4 69.4 L204.4 78.2 L203.7 76.9 L203.0 79.4 L202.3 78.8 L201.6 78.3 L200.9 77.2 L200.2 78.3 L199.5 78.5 L198.8 79.5 L198.1 77.6 L197.4 79.6 L196.7 78.1 L196.0 79.5 L195.3 77.4 L194.6 77.2 L193.9 78.2 L193.2 77.7 L192.5 78.8 L191.8 77.6 L191.1 76.9 L190.4 77.7 L189.7 77.6 L189.0 77.0 L188.3 78.6 L187.6 78.8 L186.9 77.9 L186.2 79.6 L185.5 77.4 L184.8 77.6 L184.1 77.5 L183.4 77.0 L182.7 78.4 L182.0 79.0 L181.3 76.8 L180.6 78.8 L179.9 78.6 L179.2 79.2 L178.5 77.9 L177.8 76.9 L177.1 78.8 L176.4 79.4 L175.7 79.2 L175.0 79.2 L174.3 78.3 L173.6 79.2 L172.9 78.6 L172.2 79.2 L171.5 78.7 L170.8 77.3 L170.1 77.8 L169.4 79.4 L168.7 78.7 L168.0 78.3 L167.3 77.5 L166.6 76.9 L165.9 78.0 L165.2 77.6 L164.5 78.3 L163.8 78.3 L163.1 77.9 L162.4 77.8 L161.7 79.6 L161.0 78.4 L160.3 79.6 L159.6 78.1 L158.9 78.1 L158.2 77.5 L157.5 78.8 L156.8 79.2 L156.1 77.3 L155.4 79.0 L154.7 77.2 L154.0 77.8 Z" fill="#f2f218"/><rect x="51.2" y="13.7" width="1" height="62" fill="#f2f218"/><rect x="153.2" y="13.7" width="1" height="62" fill="#f2f218"/></svg>
<svg style="position:absolute;left:408px;top:228px;" width="5" height="4" viewBox="0 0 5 4"><path d="M0 0 H5 L2.5 3.5 Z" fill="#999"/></svg>
<div style="position:absolute;left:297px;top:233px;width:30.5px;height:8.5px;background:linear-gradient(#fbfbfb,#e4e4e4);border:1px solid #9fb8d6;border-radius:1px;"></div>
<div class="t" style="left:252.25px;width:120px;text-align:center;top:232.2px;font-size:6.5px;line-height:10px;color:#5a5a66;transform-origin:50% 50%;transform:scaleX(0.85);">Autoscale</div>
<svg style="position:absolute;left:360px;top:236.9px;" width="4" height="4" viewBox="0 0 4 4"><path d="M0 0 L4 2 L0 4 Z" fill="#6a6"/></svg>
<div class="t" style="left:365.5px;top:233.9px;font-size:6.6px;line-height:10px;color:#5e5e5e;transform-origin:0 50%;transform:scaleX(0.8);">Position:&nbsp; 0.000 s</div>
<svg style="position:absolute;left:511px;top:236.9px;" width="4" height="4" viewBox="0 0 4 4"><path d="M0 0 L4 2 L0 4 Z" fill="#6a6"/></svg>
<div class="t" style="left:518px;top:233.9px;font-size:6.6px;line-height:10px;color:#5e5e5e;transform-origin:0 50%;transform:scaleX(0.8);">Scale:&nbsp;&nbsp; 20.000 ms</div>
<div style="position:absolute;left:575.3px;top:75.3px;width:125px;height:74.2px;background:#fff;border:1px solid #dcdcdc;"></div>
<div class="t" style="left:578px;top:76.5px;font-size:6.4px;line-height:9px;color:#5e5e5e;transform-origin:0 50%;transform:scaleX(0.8);">Number of Component Carriers:</div>
<div class="t" style="left:658px;top:76.5px;font-size:6.4px;line-height:9px;color:#5e5e5e;transform-origin:0 50%;transform:scaleX(0.85);">8</div>
<div class="t" style="left:578px;top:85.2px;font-size:6.4px;line-height:9px;color:#5e5e5e;transform-origin:0 50%;transform:scaleX(0.8);">Component Carrier Index:</div>
<div class="t" style="left:658px;top:85.2px;font-size:6.4px;line-height:9px;color:#5e5e5e;transform-origin:0 50%;transform:scaleX(0.85);">1</div>
<div class="t" style="left:578px;top:93.9px;font-size:6.4px;line-height:9px;color:#5e5e5e;transform-origin:0 50%;transform:scaleX(0.8);">Cell Identity:</div>
<div class="t" style="left:658px;top:93.9px;font-size:6.4px;line-height:9px;color:#5e5e5e;transform-origin:0 50%;transform:scaleX(0.85);">1</div>
<div class="t" style="left:578px;top:102.6px;font-size:6.4px;line-height:9px;color:#5e5e5e;transform-origin:0 50%;transform:scaleX(0.8);">Frequency Error:</div>
<div class="t" style="left:658px;top:102.6px;font-size:6.4px;line-height:9px;color:#5e5e5e;transform-origin:0 50%;transform:scaleX(0.85);">148.586 Hz</div>
<div class="t" style="left:578px;top:111.3px;font-size:6.4px;line-height:9px;color:#5e5e5e;transform-origin:0 50%;transform:scaleX(0.8);">Composite RMS EVM Mean:</div>
<div class="t" style="left:658px;top:111.3px;font-size:6.4px;line-height:9px;color:#5e5e5e;transform-origin:0 50%;transform:scaleX(0.85);">1.298 %</div>
<div class="t" style="left:578px;top:120.0px;font-size:6.4px;line-height:9px;color:#5e5e5e;transform-origin:0 50%;transform:scaleX(0.8);">Composite Peak EVM Maximum:</div>
<div class="t" style="left:658px;top:120.0px;font-size:6.4px;line-height:9px;color:#5e5e5e;transform-origin:0 50%;transform:scaleX(0.85);">5.091 %</div>
<svg style="position:absolute;left:703.5px;top:65px;" width="139" height="139" viewBox="0 0 139 139"><rect width="100%" height="100%" fill="#000"/><path d="M14.0 19.8 H24.0 M19.0 14.8 V24.8" stroke="#6a7888" stroke-width="0.5"/><circle cx="19.0" cy="19.8" r="1.9" fill="#2090f4"/><path d="M14.0 34.1 H24.0 M19.0 29.1 V39.1" stroke="#6a7888" stroke-width="0.5"/><circle cx="19.0" cy="34.1" r="1.9" fill="#2090f4"/><path d="M14.0 48.5 H24.0 M19.0 43.5 V53.5" stroke="#6a7888" stroke-width="0.5"/><circle cx="19.0" cy="48.5" r="1.9" fill="#2090f4"/><path d="M14.0 62.8 H24.0 M19.0 57.8 V67.8" stroke="#6a7888" stroke-width="0.5"/><circle cx="19.0" cy="62.8" r="1.9" fill="#2090f4"/><path d="M14.0 77.2 H24.0 M19.0 72.2 V82.2" stroke="#6a7888" stroke-width="0.5"/><circle cx="19.0" cy="77.2" r="1.9" fill="#2090f4"/><path d="M14.0 91.5 H24.0 M19.0 86.5 V96.5" stroke="#6a7888" stroke-width="0.5"/><circle cx="19.0" cy="91.5" r="1.9" fill="#2090f4"/><path d="M14.0 105.9 H24.0 M19.0 100.9 V110.9" stroke="#6a7888" stroke-width="0.5"/><circle cx="19.0" cy="105.9" r="1.9" fill="#2090f4"/><path d="M14.0 120.2 H24.0 M19.0 115.2 V125.2" stroke="#6a7888" stroke-width="0.5"/><circle cx="19.0" cy="120.2" r="1.9" fill="#2090f4"/><path d="M28.4 19.8 H38.4 M33.4 14.8 V24.8" stroke="#6a7888" stroke-width="0.5"/><circle cx="33.4" cy="19.8" r="1.9" fill="#2090f4"/><path d="M28.4 34.1 H38.4 M33.4 29.1 V39.1" stroke="#6a7888" stroke-width="0.5"/><circle cx="33.4" cy="34.1" r="1.9" fill="#2090f4"/><path d="M28.4 48.5 H38.4 M33.4 43.5 V53.5" stroke="#6a7888" stroke-width="0.5"/><circle cx="33.4" cy="48.5" r="1.9" fill="#2090f4"/><path d="M28.4 62.8 H38.4 M33.4 57.8 V67.8" stroke="#6a7888" stroke-width="0.5"/><circle cx="33.4" cy="62.8" r="1.9" fill="#2090f4"/><path d="M28.4 77.2 H38.4 M33.4 72.2 V82.2" stroke="#6a7888" stroke-width="0.5"/><circle cx="33.4" cy="77.2" r="1.9" fill="#2090f4"/><path d="M28.4 91.5 H38.4 M33.4 86.5 V96.5" stroke="#6a7888" stroke-width="0.5"/><circle cx="33.4" cy="91.5" r="1.9" fill="#2090f4"/><path d="M28.4 105.9 H38.4 M33.4 100.9 V110.9" stroke="#6a7888" stroke-width="0.5"/><circle cx="33.4" cy="105.9" r="1.9" fill="#2090f4"/><path d="M28.4 120.2 H38.4 M33.4 115.2 V125.2" stroke="#6a7888" stroke-width="0.5"/><circle cx="33.4" cy="120.2" r="1.9" fill="#2090f4"/><path d="M42.7 19.8 H52.7 M47.7 14.8 V24.8" stroke="#6a7888" stroke-width="0.5"/><circle cx="47.7" cy="19.8" r="1.9" fill="#2090f4"/><path d="M42.7 34.1 H52.7 M47.7 29.1 V39.1" stroke="#6a7888" stroke-width="0.5"/><circle cx="47.7" cy="34.1" r="1.9" fill="#2090f4"/><path d="M42.7 48.5 H52.7 M47.7 43.5 V53.5" stroke="#6a7888" stroke-width="0.5"/><circle cx="47.7" cy="48.5" r="1.9" fill="#2090f4"/><path d="M42.7 62.8 H52.7 M47.7 57.8 V67.8" stroke="#6a7888" stroke-width="0.5"/><circle cx="47.7" cy="62.8" r="1.9" fill="#2090f4"/><path d="M42.7 77.2 H52.7 M47.7 72.2 V82.2" stroke="#6a7888" stroke-width="0.5"/><circle cx="47.7" cy="77.2" r="1.9" fill="#2090f4"/><path d="M42.7 91.5 H52.7 M47.7 86.5 V96.5" stroke="#6a7888" stroke-width="0.5"/><circle cx="47.7" cy="91.5" r="1.9" fill="#2090f4"/><path d="M42.7 105.9 H52.7 M47.7 100.9 V110.9" stroke="#6a7888" stroke-width="0.5"/><circle cx="47.7" cy="105.9" r="1.9" fill="#2090f4"/><path d="M42.7 120.2 H52.7 M47.7 115.2 V125.2" stroke="#6a7888" stroke-width="0.5"/><circle cx="47.7" cy="120.2" r="1.9" fill="#2090f4"/><path d="M57.0 19.8 H67.0 M62.0 14.8 V24.8" stroke="#6a7888" stroke-width="0.5"/><circle cx="62.0" cy="19.8" r="1.9" fill="#2090f4"/><path d="M57.0 34.1 H67.0 M62.0 29.1 V39.1" stroke="#6a7888" stroke-width="0.5"/><circle cx="62.0" cy="34.1" r="1.9" fill="#2090f4"/><path d="M57.0 48.5 H67.0 M62.0 43.5 V53.5" stroke="#6a7888" stroke-width="0.5"/><circle cx="62.0" cy="48.5" r="1.9" fill="#2090f4"/><path d="M57.0 62.8 H67.0 M62.0 57.8 V67.8" stroke="#6a7888" stroke-width="0.5"/><circle cx="62.0" cy="62.8" r="1.9" fill="#2090f4"/><path d="M57.0 77.2 H67.0 M62.0 72.2 V82.2" stroke="#6a7888" stroke-width="0.5"/><circle cx="62.0" cy="77.2" r="1.9" fill="#2090f4"/><path d="M57.0 91.5 H67.0 M62.0 86.5 V96.5" stroke="#6a7888" stroke-width="0.5"/><circle cx="62.0" cy="91.5" r="1.9" fill="#2090f4"/><path d="M57.0 105.9 H67.0 M62.0 100.9 V110.9" stroke="#6a7888" stroke-width="0.5"/><circle cx="62.0" cy="105.9" r="1.9" fill="#2090f4"/><path d="M57.0 120.2 H67.0 M62.0 115.2 V125.2" stroke="#6a7888" stroke-width="0.5"/><circle cx="62.0" cy="120.2" r="1.9" fill="#2090f4"/><path d="M71.4 19.8 H81.4 M76.4 14.8 V24.8" stroke="#6a7888" stroke-width="0.5"/><circle cx="76.4" cy="19.8" r="1.9" fill="#2090f4"/><path d="M71.4 34.1 H81.4 M76.4 29.1 V39.1" stroke="#6a7888" stroke-width="0.5"/><circle cx="76.4" cy="34.1" r="1.9" fill="#2090f4"/><path d="M71.4 48.5 H81.4 M76.4 43.5 V53.5" stroke="#6a7888" stroke-width="0.5"/><circle cx="76.4" cy="48.5" r="1.9" fill="#2090f4"/><path d="M71.4 62.8 H81.4 M76.4 57.8 V67.8" stroke="#6a7888" stroke-width="0.5"/><circle cx="76.4" cy="62.8" r="1.9" fill="#2090f4"/><path d="M71.4 77.2 H81.4 M76.4 72.2 V82.2" stroke="#6a7888" stroke-width="0.5"/><circle cx="76.4" cy="77.2" r="1.9" fill="#2090f4"/><path d="M71.4 91.5 H81.4 M76.4 86.5 V96.5" stroke="#6a7888" stroke-width="0.5"/><circle cx="76.4" cy="91.5" r="1.9" fill="#2090f4"/><path d="M71.4 105.9 H81.4 M76.4 100.9 V110.9" stroke="#6a7888" stroke-width="0.5"/><circle cx="76.4" cy="105.9" r="1.9" fill="#2090f4"/><path d="M71.4 120.2 H81.4 M76.4 115.2 V125.2" stroke="#6a7888" stroke-width="0.5"/><circle cx="76.4" cy="120.2" r="1.9" fill="#2090f4"/><path d="M85.8 19.8 H95.8 M90.8 14.8 V24.8" stroke="#6a7888" stroke-width="0.5"/><circle cx="90.8" cy="19.8" r="1.9" fill="#2090f4"/><path d="M85.8 34.1 H95.8 M90.8 29.1 V39.1" stroke="#6a7888" stroke-width="0.5"/><circle cx="90.8" cy="34.1" r="1.9" fill="#2090f4"/><path d="M85.8 48.5 H95.8 M90.8 43.5 V53.5" stroke="#6a7888" stroke-width="0.5"/><circle cx="90.8" cy="48.5" r="1.9" fill="#2090f4"/><path d="M85.8 62.8 H95.8 M90.8 57.8 V67.8" stroke="#6a7888" stroke-width="0.5"/><circle cx="90.8" cy="62.8" r="1.9" fill="#2090f4"/><path d="M85.8 77.2 H95.8 M90.8 72.2 V82.2" stroke="#6a7888" stroke-width="0.5"/><circle cx="90.8" cy="77.2" r="1.9" fill="#2090f4"/><path d="M85.8 91.5 H95.8 M90.8 86.5 V96.5" stroke="#6a7888" stroke-width="0.5"/><circle cx="90.8" cy="91.5" r="1.9" fill="#2090f4"/><path d="M85.8 105.9 H95.8 M90.8 100.9 V110.9" stroke="#6a7888" stroke-width="0.5"/><circle cx="90.8" cy="105.9" r="1.9" fill="#2090f4"/><path d="M85.8 120.2 H95.8 M90.8 115.2 V125.2" stroke="#6a7888" stroke-width="0.5"/><circle cx="90.8" cy="120.2" r="1.9" fill="#2090f4"/><path d="M100.1 19.8 H110.1 M105.1 14.8 V24.8" stroke="#6a7888" stroke-width="0.5"/><circle cx="105.1" cy="19.8" r="1.9" fill="#2090f4"/><path d="M100.1 34.1 H110.1 M105.1 29.1 V39.1" stroke="#6a7888" stroke-width="0.5"/><circle cx="105.1" cy="34.1" r="1.9" fill="#2090f4"/><path d="M100.1 48.5 H110.1 M105.1 43.5 V53.5" stroke="#6a7888" stroke-width="0.5"/><circle cx="105.1" cy="48.5" r="1.9" fill="#2090f4"/><path d="M100.1 62.8 H110.1 M105.1 57.8 V67.8" stroke="#6a7888" stroke-width="0.5"/><circle cx="105.1" cy="62.8" r="1.9" fill="#2090f4"/><path d="M100.1 77.2 H110.1 M105.1 72.2 V82.2" stroke="#6a7888" stroke-width="0.5"/><circle cx="105.1" cy="77.2" r="1.9" fill="#2090f4"/><path d="M100.1 91.5 H110.1 M105.1 86.5 V96.5" stroke="#6a7888" stroke-width="0.5"/><circle cx="105.1" cy="91.5" r="1.9" fill="#2090f4"/><path d="M100.1 105.9 H110.1 M105.1 100.9 V110.9" stroke="#6a7888" stroke-width="0.5"/><circle cx="105.1" cy="105.9" r="1.9" fill="#2090f4"/><path d="M100.1 120.2 H110.1 M105.1 115.2 V125.2" stroke="#6a7888" stroke-width="0.5"/><circle cx="105.1" cy="120.2" r="1.9" fill="#2090f4"/><path d="M114.5 19.8 H124.5 M119.5 14.8 V24.8" stroke="#6a7888" stroke-width="0.5"/><circle cx="119.5" cy="19.8" r="1.9" fill="#2090f4"/><path d="M114.5 34.1 H124.5 M119.5 29.1 V39.1" stroke="#6a7888" stroke-width="0.5"/><circle cx="119.5" cy="34.1" r="1.9" fill="#2090f4"/><path d="M114.5 48.5 H124.5 M119.5 43.5 V53.5" stroke="#6a7888" stroke-width="0.5"/><circle cx="119.5" cy="48.5" r="1.9" fill="#2090f4"/><path d="M114.5 62.8 H124.5 M119.5 57.8 V67.8" stroke="#6a7888" stroke-width="0.5"/><circle cx="119.5" cy="62.8" r="1.9" fill="#2090f4"/><path d="M114.5 77.2 H124.5 M119.5 72.2 V82.2" stroke="#6a7888" stroke-width="0.5"/><circle cx="119.5" cy="77.2" r="1.9" fill="#2090f4"/><path d="M114.5 91.5 H124.5 M119.5 86.5 V96.5" stroke="#6a7888" stroke-width="0.5"/><circle cx="119.5" cy="91.5" r="1.9" fill="#2090f4"/><path d="M114.5 105.9 H124.5 M119.5 100.9 V110.9" stroke="#6a7888" stroke-width="0.5"/><circle cx="119.5" cy="105.9" r="1.9" fill="#2090f4"/><path d="M114.5 120.2 H124.5 M119.5 115.2 V125.2" stroke="#6a7888" stroke-width="0.5"/><circle cx="119.5" cy="120.2" r="1.9" fill="#2090f4"/><circle cx="36.2" cy="36.9" r="2" fill="#f8f028"/><circle cx="101.9" cy="36.9" r="2" fill="#f8f028"/><circle cx="36.2" cy="102.7" r="2" fill="#f8f028"/><circle cx="101.9" cy="102.7" r="2" fill="#f8f028"/><circle cx="69.7" cy="70" r="0.7" fill="#2c2"/></svg>
<div class="t" style="left:709px;top:192.8px;font-size:6.1px;line-height:9px;color:#f0e838;transform-origin:0 50%;transform:scaleX(0.85);">Cell ID Detected</div>
<div class="t" style="left:31px;top:256.0px;font-size:7.2px;line-height:10px;color:#3a9a3a;transform-origin:0 50%;transform:scaleX(0.85);">Pass</div>
<div class="t" style="left:48px;top:256.0px;font-size:6.6px;line-height:10px;color:#5e5e5e;transform-origin:0 50%;transform:scaleX(0.85);">0.0 %</div>
<div style="position:absolute;left:263.3px;top:255.4px;width:23.69999999999999px;height:10.999999999999972px;background:linear-gradient(#fbfbfb,#e4e4e4);border:1px solid #9fb8d6;border-radius:1px;"></div>
<div class="t" style="left:215.14999999999998px;width:120px;text-align:center;top:255.9px;font-size:6.5px;line-height:10px;color:#333;transform-origin:50% 50%;transform:scaleX(0.85);">Clear</div>
<svg style="position:absolute;left:17.5px;top:270px;" width="4" height="4" viewBox="0 0 4 4"><path d="M0 0 L4 2 L0 4 Z" fill="#6a6"/></svg>
<div class="t" style="left:24px;top:267.0px;font-size:6.6px;line-height:10px;color:#5e5e5e;transform-origin:0 50%;transform:scaleX(0.85);">0.00 dBm</div>
<div style="position:absolute;left:25.7px;top:277.7px;width:30.099999999999998px;height:8.5px;background:#fff;border:1px solid #d6d6d6;"></div>
<div class="t" style="left:29.7px;top:276.9px;font-size:6.5px;line-height:10px;color:#444;transform-origin:0 50%;transform:scaleX(0.85);">dBm</div>
<div style="position:absolute;left:48.8px;top:278.7px;width:6px;height:6.5px;background:linear-gradient(#d9e8f7,#a9c9ea);border:1px solid #8db3dc;"></div>
<svg style="position:absolute;left:17.5px;top:294px;" width="4" height="4" viewBox="0 0 4 4"><path d="M0 0 L4 2 L0 4 Z" fill="#777"/></svg>
<div class="t" style="left:22px;top:287.0px;font-size:6.5px;line-height:10px;color:#5e5e5e;transform-origin:0 50%;transform:scaleX(0.85);">dB/div:</div>
<div class="t" style="left:24px;top:294.0px;font-size:6.6px;line-height:10px;color:#5e5e5e;transform-origin:0 50%;transform:scaleX(0.85);">12.3 dB</div>
<div class="t" style="right:789px;top:265.9px;font-size:6.3px;line-height:9px;color:#5e5e5e;text-align:right;transform-origin:100% 50%;transform:scaleX(0.85);">0.0</div>
<div style="position:absolute;left:76.5px;top:270px;width:1.5px;height:1px;background:#888;"></div>
<div class="t" style="right:789px;top:276.8px;font-size:6.3px;line-height:9px;color:#5e5e5e;text-align:right;transform-origin:100% 50%;transform:scaleX(0.85);">-12.3</div>
<div style="position:absolute;left:76.5px;top:281px;width:1.5px;height:1px;background:#888;"></div>
<div class="t" style="right:789px;top:287.7px;font-size:6.3px;line-height:9px;color:#5e5e5e;text-align:right;transform-origin:100% 50%;transform:scaleX(0.85);">-24.5</div>
<div style="position:absolute;left:76.5px;top:292px;width:1.5px;height:1px;background:#888;"></div>
<div class="t" style="right:789px;top:298.6px;font-size:6.3px;line-height:9px;color:#5e5e5e;text-align:right;transform-origin:100% 50%;transform:scaleX(0.85);">-36.8</div>
<div style="position:absolute;left:76.5px;top:303px;width:1.5px;height:1px;background:#888;"></div>
<div class="t" style="right:789px;top:309.5px;font-size:6.3px;line-height:9px;color:#5e5e5e;text-align:right;transform-origin:100% 50%;transform:scaleX(0.85);">-49.1</div>
<div style="position:absolute;left:76.5px;top:314px;width:1.5px;height:1px;background:#888;"></div>
<div class="t" style="right:789px;top:320.4px;font-size:6.3px;line-height:9px;color:#5e5e5e;text-align:right;transform-origin:100% 50%;transform:scaleX(0.85);">-61.3</div>
<div style="position:absolute;left:76.5px;top:325px;width:1.5px;height:1px;background:#888;"></div>
<div class="t" style="right:789px;top:331.2px;font-size:6.3px;line-height:9px;color:#5e5e5e;text-align:right;transform-origin:100% 50%;transform:scaleX(0.85);">-73.6</div>
<div style="position:absolute;left:76.5px;top:336px;width:1.5px;height:1px;background:#888;"></div>
<div class="t" style="right:789px;top:342.1px;font-size:6.3px;line-height:9px;color:#5e5e5e;text-align:right;transform-origin:100% 50%;transform:scaleX(0.85);">-85.9</div>
<div style="position:absolute;left:76.5px;top:347px;width:1.5px;height:1px;background:#888;"></div>
<div class="t" style="right:789px;top:353.0px;font-size:6.3px;line-height:9px;color:#5e5e5e;text-align:right;transform-origin:100% 50%;transform:scaleX(0.85);">-98.1</div>
<div style="position:absolute;left:76.5px;top:358px;width:1.5px;height:1px;background:#888;"></div>
<div class="t" style="right:789px;top:363.9px;font-size:6.3px;line-height:9px;color:#5e5e5e;text-align:right;transform-origin:100% 50%;transform:scaleX(0.85);">-110.4</div>
<div style="position:absolute;left:76.5px;top:368px;width:1.5px;height:1px;background:#888;"></div>
<div class="t" style="right:789px;top:374.8px;font-size:6.3px;line-height:9px;color:#5e5e5e;text-align:right;transform-origin:100% 50%;transform:scaleX(0.85);">-122.7</div>
<div style="position:absolute;left:76.5px;top:379px;width:1.5px;height:1px;background:#888;"></div>
<div class="t" style="left:21px;top:371.8px;font-size:6.5px;line-height:10px;color:#5e5e5e;transform-origin:0 50%;transform:scaleX(0.85);">-122.68 dBm</div>
<svg style="position:absolute;left:79.8px;top:268.7px;" width="206.5" height="109.5" viewBox="0 0 206.5 109.5"><rect width="100%" height="100%" fill="#000"/><path d="M21.70 0 V109.5" stroke="#606060" stroke-width="1"/><path d="M42.70 0 V109.5" stroke="#606060" stroke-width="1"/><path d="M62.70 0 V109.5" stroke="#606060" stroke-width="1"/><path d="M83.70 0 V109.5" stroke="#606060" stroke-width="1"/><path d="M103.70 0 V109.5" stroke="#606060" stroke-width="1"/><path d="M124.70 0 V109.5" stroke="#606060" stroke-width="1"/><path d="M145.70 0 V109.5" stroke="#606060" stroke-width="1"/><path d="M165.70 0 V109.5" stroke="#606060" stroke-width="1"/><path d="M186.70 0 V109.5" stroke="#606060" stroke-width="1"/><path d="M0 11.80 H206.5" stroke="#606060" stroke-width="1"/><path d="M0 22.80 H206.5" stroke="#606060" stroke-width="1"/><path d="M0 33.80 H206.5" stroke="#606060" stroke-width="1"/><path d="M0 44.80 H206.5" stroke="#606060" stroke-width="1"/><path d="M0 55.80 H206.5" stroke="#606060" stroke-width="1"/><path d="M0 66.80 H206.5" stroke="#606060" stroke-width="1"/><path d="M0 77.80 H206.5" stroke="#606060" stroke-width="1"/><path d="M0 88.80 H206.5" stroke="#606060" stroke-width="1"/><path d="M0 99.80 H206.5" stroke="#606060" stroke-width="1"/><path d="M3.5 52.6 L4.1 52.3 L4.7 53.4 L5.3 53.1 L5.9 52.5 L6.5 52.4 L7.1 51.9 L7.7 52.2 L8.3 52.1 L8.9 53.5 L9.5 53.5 L10.1 53.1 L10.7 52.6 L11.3 52.3 L11.9 52.0 L12.5 53.2 L13.1 52.3 L13.7 52.0 L14.3 52.7 L14.9 53.7 L15.5 51.9 L16.1 52.2 L16.7 53.2 L17.3 52.7 L17.9 52.3 L18.5 53.0 L19.1 52.2 L19.7 53.6 L20.3 51.7 L20.9 53.5 L21.5 51.7 L22.1 53.4 L22.7 52.2 L23.3 53.1 L23.9 53.0 L24.5 52.8 L25.1 52.2 L25.7 52.3 L26.3 53.1 L26.9 52.9 L27.5 51.7 L28.1 53.6 L28.7 52.7 L29.3 53.1 L29.9 53.0 L30.5 53.6 L31.1 52.5 L31.7 53.2 L32.3 52.3 L32.9 53.2 L33.5 52.7 L34.1 53.0 L34.7 52.1 L35.3 51.8 L35.9 53.5 L36.5 53.6 L37.1 53.2 L37.7 52.5 L38.3 51.7 L38.9 51.9 L39.5 53.3 L40.1 51.8 L40.7 52.1 L41.3 51.8 L41.9 53.2 L42.5 53.5 L43.1 53.5 L43.7 52.9 L44.3 52.3 L44.9 53.5 L45.5 51.7 L46.1 53.6 L46.7 52.2 L47.3 53.6 L47.9 53.2 L48.5 52.9 L49.1 53.3 L49.7 52.2 L50.3 52.4 L50.9 53.7 L51.5 52.7 L52.1 52.2 L52.7 53.0 L53.3 53.0 L53.9 52.3 L54.5 52.1 L55.1 53.5 L55.7 53.7 L56.3 53.0 L56.9 53.3 L57.5 51.8 L58.1 53.6 L58.7 52.4 L59.3 52.2 L59.9 51.9 L60.5 52.1 L61.1 52.2 L61.7 52.1 L62.3 52.1 L62.9 52.8 L63.5 52.8 L64.1 53.1 L64.7 53.6 L65.3 52.4 L65.9 53.7 L66.5 52.1 L67.1 52.5 L67.7 53.5 L68.3 52.8 L68.9 51.9 L69.5 52.0 L70.1 53.6 L70.7 53.3 L71.3 53.6 L71.9 51.8 L72.5 53.5 L73.1 52.0 L73.7 53.4 L74.3 52.5 L74.9 51.9 L75.5 53.5 L76.1 53.2 L76.7 51.9 L77.3 53.0 L77.9 52.9 L78.5 52.6 L79.1 52.7 L79.7 53.3 L80.3 51.9 L80.9 51.9 L81.5 51.8 L82.1 53.3 L82.7 52.5 L83.3 53.7 L83.9 52.1 L84.5 53.6 L85.1 53.6 L85.7 52.0 L86.3 52.0 L86.9 52.1 L87.5 52.3 L88.1 53.6 L88.7 52.0 L89.3 53.0 L89.9 52.8 L90.5 51.9 L91.1 52.5 L91.7 52.9 L92.3 52.6 L92.9 51.8 L93.5 53.7 L94.1 52.3 L94.7 52.9 L95.3 53.5 L95.9 51.7 L96.5 52.4 L97.1 52.9 L97.7 52.6 L98.3 52.2 L98.9 53.4 L99.5 52.2 L100.1 52.8 L100.7 52.6 L101.3 52.2 L101.9 52.5 L102.5 51.7 L103.1 52.0 L103.7 52.7 L104.3 52.0 L104.9 53.5 L105.5 51.7 L106.1 52.6 L106.7 52.2 L107.3 52.4 L107.9 53.4 L108.5 52.6 L109.1 52.2 L109.7 52.1 L110.3 52.2 L110.9 53.2 L111.5 52.4 L112.1 53.0 L112.7 53.7 L113.3 53.1 L113.9 53.1 L114.5 52.9 L115.1 52.0 L115.7 52.4 L116.3 53.1 L116.9 53.2 L117.5 52.4 L118.1 53.5 L118.7 53.5 L119.3 51.9 L119.9 53.3 L120.5 53.0 L121.1 53.2 L121.7 51.7 L122.3 52.4 L122.9 52.7 L123.5 51.8 L124.1 53.2 L124.7 52.8 L125.3 51.9 L125.9 52.1 L126.5 51.7 L127.1 53.3 L127.7 52.4 L128.3 52.3 L128.9 52.7 L129.5 51.9 L130.1 53.3 L130.7 52.5 L131.3 51.8 L131.9 52.7 L132.5 52.2 L133.1 53.2 L133.7 52.4 L134.3 53.0 L134.9 53.2 L135.5 53.5 L136.1 53.1 L136.7 52.2 L137.3 52.0 L137.9 53.2 L138.5 51.9 L139.1 53.3 L139.7 52.1 L140.3 52.5 L140.9 53.3 L141.5 53.0 L142.1 52.5 L142.7 52.6 L143.3 52.5 L143.9 53.5 L144.5 53.4 L145.1 52.6 L145.7 51.9 L146.3 53.1 L146.9 52.6 L147.5 53.1 L148.1 53.3 L148.7 53.6 L149.3 52.0 L149.9 52.7 L150.5 52.8 L151.1 53.0 L151.7 52.5 L152.3 52.5 L152.9 52.4 L153.5 51.7 L154.1 53.1 L154.7 53.2 L155.3 52.1 L155.9 52.1 L156.5 53.3 L157.1 52.8 L157.7 52.4 L158.3 53.3 L158.9 52.0 L159.5 52.2 L160.1 52.1 L160.7 52.3 L161.3 52.6 L161.9 52.4 L162.5 51.8 L163.1 53.3 L163.7 53.0 L164.3 53.0 L164.9 52.2 L165.5 53.5 L166.1 52.9 L166.7 53.5 L167.3 52.1 L167.9 53.2 L168.5 52.8 L169.1 52.7 L169.7 52.0 L170.3 52.8 L170.9 52.6 L171.5 53.4 L172.1 53.6 L172.7 53.0 L173.3 53.1 L173.9 52.7 L174.5 51.8 L175.1 52.4 L175.7 52.8 L176.3 52.5 L176.9 52.3 L177.5 52.7 L178.1 53.6 L178.7 52.4 L179.3 53.0 L179.9 53.5 L180.5 51.7 L181.1 52.9 L181.7 53.5 L182.3 53.0 L182.9 53.1 L183.5 52.6 L184.1 51.8 L184.7 53.0 L185.3 53.3 L185.9 52.5 L186.5 53.0 L187.1 51.8 L187.7 52.9 L188.3 51.7 L188.9 53.6 L189.5 52.5 L190.1 52.1 L190.7 53.1 L191.3 51.9 L191.9 53.1 L192.5 52.1 L193.1 53.1 L193.7 51.9 L194.3 52.6 L194.9 53.1 L195.5 53.3 L196.1 52.0 L196.7 51.8 L197.3 52.6 L197.9 52.4 L198.5 52.5 L199.1 53.6 L199.7 52.3 L200.3 53.1 L200.9 53.7 L201.5 52.3 L202.1 52.5 L202.7 53.5 L203.3 52.2 L203.9 53.3 L204.5 53.3 L204.5 85.1 L203.9 94.0 L203.3 82.0 L202.7 87.7 L202.1 83.8 L201.5 82.0 L200.9 84.8 L200.3 98.4 L199.7 79.4 L199.1 84.5 L198.5 81.7 L197.9 83.5 L197.3 92.3 L196.7 81.6 L196.1 85.0 L195.5 93.9 L194.9 86.6 L194.3 95.3 L193.7 83.4 L193.1 85.0 L192.5 79.4 L191.9 80.7 L191.3 88.2 L190.7 79.9 L190.1 83.1 L189.5 79.7 L188.9 85.9 L188.3 81.7 L187.7 85.4 L187.1 79.8 L186.5 92.5 L185.9 81.2 L185.3 88.0 L184.7 81.6 L184.1 84.4 L183.5 88.6 L182.9 80.5 L182.3 83.9 L181.7 83.3 L181.1 83.6 L180.5 80.3 L179.9 87.9 L179.3 92.5 L178.7 88.3 L178.1 83.6 L177.5 80.9 L176.9 84.8 L176.3 82.9 L175.7 90.4 L175.1 97.9 L174.5 84.0 L173.9 82.4 L173.3 101.4 L172.7 79.2 L172.1 79.5 L171.5 81.6 L170.9 82.9 L170.3 93.9 L169.7 82.4 L169.1 79.4 L168.5 84.8 L167.9 82.1 L167.3 83.8 L166.7 84.5 L166.1 84.5 L165.5 93.8 L164.9 95.4 L164.3 84.7 L163.7 88.8 L163.1 80.0 L162.5 84.8 L161.9 85.5 L161.3 83.5 L160.7 93.6 L160.1 79.0 L159.5 87.6 L158.9 99.9 L158.3 89.1 L157.7 83.5 L157.1 80.6 L156.5 83.4 L155.9 79.9 L155.3 84.6 L154.7 85.6 L154.1 86.0 L153.5 81.9 L152.9 85.2 L152.3 94.2 L151.7 93.4 L151.1 84.8 L150.5 84.0 L149.9 79.7 L149.3 84.5 L148.7 79.3 L148.1 81.7 L147.5 93.1 L146.9 83.4 L146.3 89.4 L145.7 81.9 L145.1 81.2 L144.5 83.8 L143.9 84.4 L143.3 80.6 L142.7 83.0 L142.1 84.2 L141.5 89.5 L140.9 83.9 L140.3 79.2 L139.7 87.9 L139.1 84.1 L138.5 81.7 L137.9 79.7 L137.3 91.1 L136.7 81.3 L136.1 89.0 L135.5 85.8 L134.9 89.3 L134.3 90.3 L133.7 90.2 L133.1 84.3 L132.5 82.2 L131.9 81.7 L131.3 89.8 L130.7 94.5 L130.1 95.8 L129.5 84.5 L128.9 79.8 L128.3 80.5 L127.7 94.4 L127.1 80.3 L126.5 82.4 L125.9 84.3 L125.3 87.7 L124.7 80.5 L124.1 81.4 L123.5 81.9 L122.9 85.0 L122.3 81.2 L121.7 88.8 L121.1 93.0 L120.5 84.7 L119.9 83.4 L119.3 79.2 L118.7 90.1 L118.1 79.5 L117.5 84.7 L116.9 79.5 L116.3 83.4 L115.7 83.3 L115.1 88.7 L114.5 79.5 L113.9 94.3 L113.3 85.0 L112.7 82.3 L112.1 83.8 L111.5 80.7 L110.9 81.3 L110.3 84.2 L109.7 90.0 L109.1 83.5 L108.5 84.5 L107.9 90.9 L107.3 84.2 L106.7 83.0 L106.1 84.2 L105.5 84.9 L104.9 84.5 L104.3 91.5 L103.7 83.5 L103.1 80.4 L102.5 82.9 L101.9 89.1 L101.3 92.0 L100.7 85.6 L100.1 81.5 L99.5 79.1 L98.9 84.5 L98.3 87.5 L97.7 79.9 L97.1 80.4 L96.5 80.6 L95.9 89.7 L95.3 87.5 L94.7 82.0 L94.1 83.1 L93.5 83.1 L92.9 92.2 L92.3 80.2 L91.7 81.5 L91.1 94.5 L90.5 86.0 L89.9 83.1 L89.3 81.5 L88.7 91.2 L88.1 83.8 L87.5 83.4 L86.9 80.8 L86.3 82.5 L85.7 94.0 L85.1 94.0 L84.5 93.9 L83.9 85.9 L83.3 84.1 L82.7 94.7 L82.1 89.1 L81.5 91.6 L80.9 82.1 L80.3 79.9 L79.7 88.5 L79.1 80.6 L78.5 89.4 L77.9 82.0 L77.3 81.1 L76.7 83.2 L76.1 79.3 L75.5 79.3 L74.9 80.7 L74.3 82.6 L73.7 89.3 L73.1 90.3 L72.5 83.3 L71.9 85.5 L71.3 85.8 L70.7 89.7 L70.1 79.8 L69.5 81.0 L68.9 96.4 L68.3 83.5 L67.7 85.3 L67.1 84.7 L66.5 79.0 L65.9 89.6 L65.3 81.9 L64.7 81.2 L64.1 87.0 L63.5 87.6 L62.9 85.2 L62.3 89.8 L61.7 93.1 L61.1 83.2 L60.5 86.0 L59.9 83.2 L59.3 84.4 L58.7 85.1 L58.1 83.1 L57.5 85.4 L56.9 84.9 L56.3 92.3 L55.7 91.2 L55.1 95.4 L54.5 84.8 L53.9 97.4 L53.3 79.8 L52.7 84.2 L52.1 81.9 L51.5 84.0 L50.9 84.5 L50.3 85.9 L49.7 86.3 L49.1 87.8 L48.5 93.5 L47.9 84.8 L47.3 80.3 L46.7 82.0 L46.1 85.7 L45.5 80.6 L44.9 83.4 L44.3 89.2 L43.7 80.8 L43.1 91.1 L42.5 80.8 L41.9 82.7 L41.3 81.9 L40.7 81.5 L40.1 97.8 L39.5 84.8 L38.9 91.2 L38.3 96.7 L37.7 92.6 L37.1 79.2 L36.5 90.9 L35.9 84.1 L35.3 81.8 L34.7 89.2 L34.1 91.4 L33.5 86.2 L32.9 81.1 L32.3 89.3 L31.7 92.3 L31.1 92.4 L30.5 86.0 L29.9 89.6 L29.3 87.6 L28.7 90.4 L28.1 83.5 L27.5 81.1 L26.9 88.9 L26.3 86.5 L25.7 87.3 L25.1 85.4 L24.5 79.3 L23.9 84.4 L23.3 85.6 L22.7 86.4 L22.1 85.0 L21.5 81.7 L20.9 82.3 L20.3 79.2 L19.7 84.9 L19.1 81.8 L18.5 89.9 L17.9 92.3 L17.3 92.0 L16.7 81.9 L16.1 83.0 L15.5 86.1 L14.9 86.5 L14.3 80.5 L13.7 89.5 L13.1 82.9 L12.5 93.4 L11.9 94.1 L11.3 79.3 L10.7 84.3 L10.1 79.3 L9.5 85.6 L8.9 84.7 L8.3 81.6 L7.7 80.9 L7.1 94.4 L6.5 85.3 L5.9 86.0 L5.3 90.9 L4.7 79.8 L4.1 93.1 L3.5 86.5 Z" fill="#f4f428"/><path d="M59.2 91.1 V103.6" stroke="#b8b820" stroke-width="0.9"/><path d="M140.6 91.5 V100.3" stroke="#b8b820" stroke-width="0.9"/><path d="M21.8 89.3 V101.7" stroke="#b8b820" stroke-width="0.9"/><path d="M44.7 90.5 V104.0" stroke="#b8b820" stroke-width="0.9"/><path d="M51.3 89.6 V101.1" stroke="#b8b820" stroke-width="0.9"/><path d="M97.1 87.2 V95.3" stroke="#b8b820" stroke-width="0.9"/><path d="M153.7 90.7 V100.4" stroke="#b8b820" stroke-width="0.9"/><path d="M22.4 90.8 V103.0" stroke="#b8b820" stroke-width="0.9"/><path d="M51.1 89.5 V102.7" stroke="#b8b820" stroke-width="0.9"/><path d="M180.2 89.1 V98.9" stroke="#b8b820" stroke-width="0.9"/><path d="M121.7 87.1 V94.7" stroke="#b8b820" stroke-width="0.9"/><path d="M40.8 90.2 V99.1" stroke="#b8b820" stroke-width="0.9"/><path d="M1.2 68 V78" stroke="#c8c818" stroke-width="1"/><path d="M103.6 53 V104" stroke="#b0b030" stroke-width="0.9"/><rect x="1.5" y="51.5" width="5" height="2.5" fill="#8a8a98"/><rect x="201" y="52" width="5" height="2.5" fill="#8a8a98"/><path d="M2.5 10 L3.5 12.5 L5 6" stroke="#2070b8" stroke-width="0.9" fill="none"/><path d="M204 7 V16" stroke="#2a7fd0" stroke-width="0.9"/></svg>
<div style="position:absolute;left:19px;top:383px;width:35.5px;height:10px;background:linear-gradient(#fbfbfb,#e4e4e4);border:1px solid #9fb8d6;border-radius:1px;"></div>
<div class="t" style="left:-23.25px;width:120px;text-align:center;top:383.0px;font-size:6.6px;line-height:10px;color:#5a5a66;transform-origin:50% 50%;transform:scaleX(0.85);">Autoscale</div>
<svg style="position:absolute;left:59px;top:386px;" width="4" height="4" viewBox="0 0 4 4"><path d="M0 0 L4 2 L0 4 Z" fill="#6a6"/></svg>
<div class="t" style="left:65px;top:383.0px;font-size:6.6px;line-height:10px;color:#5e5e5e;transform-origin:0 50%;transform:scaleX(0.85);">Pos&nbsp; 2.000 GHz</div>
<svg style="position:absolute;left:229px;top:386px;" width="4" height="4" viewBox="0 0 4 4"><path d="M0 0 L4 2 L0 4 Z" fill="#6a6"/></svg>
<div class="t" style="left:236px;top:383.0px;font-size:6.6px;line-height:10px;color:#5e5e5e;transform-origin:0 50%;transform:scaleX(0.85);">Scale&nbsp;&nbsp; 831 MHz</div>
<div style="position:absolute;left:16px;top:395px;width:275px;height:1.5px;background:#d6d6d6;"></div>
<div class="t" style="left:20px;top:399.5px;font-size:6.5px;line-height:10px;color:#5e5e5e;transform-origin:0 50%;transform:scaleX(0.85);">Total Agg Power</div>
<div class="t" style="left:20px;top:409.8px;font-size:6.5px;line-height:10px;color:#5e5e5e;transform-origin:0 50%;transform:scaleX(0.85);">-15.01 dBm</div>
<div style="position:absolute;left:22px;top:423.5px;width:13.5px;height:8.199999999999989px;background:linear-gradient(#f4f8fc,#dde9f5);border:1px solid #9fbfe0;border-radius:1px;"></div>
<div class="t" style="left:-31.25px;width:120px;text-align:center;top:423.6px;font-size:5.5px;line-height:8px;color:#4a8fd8;transform-origin:50% 50%;transform:scaleX(0.85);">abs</div>
<div style="position:absolute;left:38px;top:423.5px;width:13.5px;height:8.199999999999989px;background:linear-gradient(#f4f8fc,#dde9f5);border:1px solid #9fbfe0;border-radius:1px;"></div>
<div class="t" style="left:-15.25px;width:120px;text-align:center;top:423.6px;font-size:5.5px;line-height:8px;color:#d040c0;transform-origin:50% 50%;transform:scaleX(0.85);">rel</div>
<div style="position:absolute;left:62.8px;top:400.3px;width:226px;height:31.5px;background:#fff;border:1px solid #b8cfe6;"></div>
<div style="position:absolute;left:63.5px;top:401px;width:225px;height:8px;background:linear-gradient(#fafafa,#e9e9e9);"></div>
<div style="position:absolute;left:70px;top:401px;width:1px;height:22px;background:#c9d9ea;"></div>
<div style="position:absolute;left:97.5px;top:401px;width:1px;height:22px;background:#c9d9ea;"></div>
<div style="position:absolute;left:140.6px;top:401px;width:1px;height:22px;background:#c9d9ea;"></div>
<div style="position:absolute;left:184.6px;top:401px;width:1px;height:22px;background:#c9d9ea;"></div>
<div style="position:absolute;left:228.2px;top:401px;width:1px;height:22px;background:#c9d9ea;"></div>
<div style="position:absolute;left:271.9px;top:401px;width:1px;height:22px;background:#c9d9ea;"></div>
<div style="position:absolute;left:63px;top:409px;width:218px;height:1px;background:#dde6ef;"></div>
<div style="position:absolute;left:63px;top:418px;width:218px;height:1px;background:#dde6ef;"></div>
<div class="t" style="left:73px;top:400.8px;font-size:6.3px;line-height:9px;color:#5e5e5e;transform-origin:0 50%;transform:scaleX(0.85);">Offset</div>
<div class="t" style="left:100.5px;top:400.8px;font-size:6.3px;line-height:9px;color:#5e5e5e;transform-origin:0 50%;transform:scaleX(0.85);">Start Freq</div>
<div class="t" style="left:143.6px;top:400.8px;font-size:6.3px;line-height:9px;color:#5e5e5e;transform-origin:0 50%;transform:scaleX(0.85);">Stop Freq</div>
<div class="t" style="left:187.6px;top:400.8px;font-size:6.3px;line-height:9px;color:#5e5e5e;transform-origin:0 50%;transform:scaleX(0.85);">Peak Abs</div>
<div class="t" style="left:231.2px;top:400.8px;font-size:6.3px;line-height:9px;color:#5e5e5e;transform-origin:0 50%;transform:scaleX(0.85);">Margin Abs</div>
<div class="t" style="left:274.9px;top:400.8px;font-size:6.3px;line-height:9px;color:#5e5e5e;transform-origin:0 50%;transform:scaleX(0.85);">Peak F</div>
<div class="t" style="left:73px;top:409.5px;font-size:6.3px;line-height:9px;color:#5e5e5e;transform-origin:0 50%;transform:scaleX(0.85);">OL1</div>
<div class="t" style="left:100.5px;top:409.5px;font-size:6.3px;line-height:9px;color:#5e5e5e;transform-origin:0 50%;transform:scaleX(0.85);">-50.900 kHz</div>
<div class="t" style="left:143.6px;top:409.5px;font-size:6.3px;line-height:9px;color:#5e5e5e;transform-origin:0 50%;transform:scaleX(0.85);">-5.050 MHz</div>
<div class="t" style="left:187.6px;top:409.5px;font-size:6.3px;line-height:9px;color:#5e5e5e;transform-origin:0 50%;transform:scaleX(0.85);">-90.09 dBm</div>
<div class="t" style="left:231.2px;top:409.5px;font-size:6.3px;line-height:9px;color:#5e5e5e;transform-origin:0 50%;transform:scaleX(0.85);">-90.49 dBm</div>
<div class="t" style="left:274.9px;top:409.5px;font-size:6.3px;line-height:9px;color:#5e5e5e;transform-origin:0 50%;transform:scaleX(0.85);">-74</div>
<div style="position:absolute;left:63px;top:418px;width:218px;height:5px;overflow:hidden;">
<div class="t" style="left:10px;top:0px;font-size:6.3px;line-height:9px;color:#555;transform:scaleX(0.85);transform-origin:0 50%;">OL2</div>
<div class="t" style="left:37.5px;top:0px;font-size:6.3px;line-height:9px;color:#555;transform:scaleX(0.85);transform-origin:0 50%;">-5.050 MHz</div>
<div class="t" style="left:80.6px;top:0px;font-size:6.3px;line-height:9px;color:#555;transform:scaleX(0.85);transform-origin:0 50%;">-10.050 MHz</div>
<div class="t" style="left:124.6px;top:0px;font-size:6.3px;line-height:9px;color:#555;transform:scaleX(0.85);transform-origin:0 50%;">-90.67 dBm</div>
<div class="t" style="left:168.2px;top:0px;font-size:6.3px;line-height:9px;color:#555;transform:scaleX(0.85);transform-origin:0 50%;">-90.47 dBm</div>
<div class="t" style="left:211.89999999999998px;top:0px;font-size:6.3px;line-height:9px;color:#555;transform:scaleX(0.85);transform-origin:0 50%;">-74</div>
</div>
<svg style="position:absolute;left:64.5px;top:411.5px;" width="4" height="5" viewBox="0 0 4 5"><path d="M0.5 0.5 L3 2.5 L0.5 4.5 Z" fill="#3a7fd0"/></svg>
<div style="position:absolute;left:281px;top:409px;width:7.5px;height:14.5px;background:#eef3f8;border:1px solid #b8cfe6;"></div>
<svg style="position:absolute;left:282px;top:410px;" width="6" height="5" viewBox="0 0 6 5"><path d="M1 4 L3 1.5 L5 4" stroke="#557" fill="none" stroke-width="0.8"/></svg>
<svg style="position:absolute;left:282px;top:417px;" width="6" height="5" viewBox="0 0 6 5"><path d="M1 1 L3 3.5 L5 1" stroke="#557" fill="none" stroke-width="0.8"/></svg>
<div style="position:absolute;left:63px;top:424.2px;width:226px;height:7.5px;background:#f4f7fa;border:1px solid #b8cfe6;"></div>
<div style="position:absolute;left:71px;top:424.8px;width:62px;height:6.5px;background:#fff;border:1px solid #b8cfe6;"></div>
<svg style="position:absolute;left:65px;top:425.5px;" width="5" height="5" viewBox="0 0 5 5"><path d="M3.5 0.5 L1 2.5 L3.5 4.5" stroke="#557" fill="none" stroke-width="0.8"/></svg>
<svg style="position:absolute;left:281px;top:425.5px;" width="5" height="5" viewBox="0 0 5 5"><path d="M1.5 0.5 L4 2.5 L1.5 4.5" stroke="#557" fill="none" stroke-width="0.8"/></svg>
<svg style="position:absolute;left:100px;top:426.5px;" width="4" height="3" viewBox="0 0 4 3"><circle cx="2" cy="1.5" r="1" fill="#557"/></svg>
<div style="position:absolute;left:297.2px;top:268px;width:268.5px;height:163.5px;background:#fff;border:1px solid #b3cde8;"></div>
<div style="position:absolute;left:299.2px;top:258.4px;width:52.8px;height:10.2px;background:#fff;border:1px solid #a9c6e6;border-bottom:0;"></div>
<div class="t" style="left:301.5px;top:258.6px;font-size:6.5px;line-height:10px;color:#5e5e5e;transform-origin:0 50%;transform:scaleX(0.815);">Modulation Accuracy</div>
<div style="position:absolute;left:352px;top:260px;width:14.5px;height:8.3px;background:linear-gradient(#eef5fc,#d6e6f6);border:1px solid #a9c6e6;"></div>
<div class="t" style="left:354px;top:259.8px;font-size:6px;line-height:9px;color:#5e5e5e;transform-origin:0 50%;transform:scaleX(0.85);">CHP</div>
<div style="position:absolute;left:366.5px;top:260px;width:14.5px;height:8.3px;background:linear-gradient(#eef5fc,#d6e6f6);border:1px solid #a9c6e6;"></div>
<div class="t" style="left:368.5px;top:259.8px;font-size:6px;line-height:9px;color:#5e5e5e;transform-origin:0 50%;transform:scaleX(0.85);">SEM</div>
<div class="t" style="left:308.2px;top:269.8px;font-size:6.6px;line-height:10px;color:#5e5e5e;transform-origin:0 50%;transform:scaleX(0.805);">Link direction:&nbsp; Downlink</div>
<div class="t" style="left:432px;top:269.8px;font-size:6.6px;line-height:10px;color:#5e5e5e;transform-origin:0 50%;transform:scaleX(0.81);">Number of component carriers:&nbsp; 8</div>
<div style="position:absolute;left:299.5px;top:283px;width:261.5px;height:108.8px;background:#fff;border:1px solid #b3cde8;"></div>
<div style="position:absolute;left:300.0px;top:283.5px;width:260.5px;height:9px;background:linear-gradient(#fdfdfd,#e6e6e6);"></div>
<div style="position:absolute;left:300.0px;top:292.5px;width:7px;height:99.5px;background:#fff;"></div>
<div style="position:absolute;left:306.8px;top:283.5px;width:1px;height:109px;background:#dbe3ec;"></div>
<div style="position:absolute;left:419.2px;top:283.5px;width:1px;height:109px;background:#dbe3ec;"></div>
<div style="position:absolute;left:459.6px;top:283.5px;width:1px;height:109px;background:#dbe3ec;"></div>
<div style="position:absolute;left:498.8px;top:283.5px;width:1px;height:109px;background:#dbe3ec;"></div>
<div style="position:absolute;left:538.3px;top:283.5px;width:1px;height:109px;background:#dbe3ec;"></div>
<div style="position:absolute;left:419px;top:283px;width:1.6px;height:109.5px;background:#88b3df;"></div>
<div class="t" style="left:308.5px;top:283.1px;font-size:6.4px;line-height:9px;color:#5e5e5e;transform-origin:0 50%;transform:scaleX(0.823);">Measurement Results</div>
<div class="t" style="left:421.7px;top:283.1px;font-size:6.4px;line-height:9px;color:#5e5e5e;transform-origin:0 50%;transform:scaleX(0.85);">Carrier 1</div>
<div class="t" style="left:462.1px;top:283.1px;font-size:6.4px;line-height:9px;color:#5e5e5e;transform-origin:0 50%;transform:scaleX(0.85);">Carrier 2</div>
<div class="t" style="left:501.3px;top:283.1px;font-size:6.4px;line-height:9px;color:#5e5e5e;transform-origin:0 50%;transform:scaleX(0.85);">Carrier 3</div>
<div class="t" style="left:540.8px;top:283.1px;font-size:6.4px;line-height:9px;color:#5e5e5e;transform-origin:0 50%;transform:scaleX(0.85);">Carrier 4</div>
<div style="position:absolute;left:300.5px;top:292.8px;width:6px;height:7.819999999999999px;background:linear-gradient(#f6f6f6,#e2e2e2);border:1px solid #e0e0e0;"></div>
<div style="position:absolute;left:300.0px;top:300.71999999999997px;width:260.5px;height:1px;background:#e6ebf0;"></div>
<div class="t" style="left:308.5px;top:292.2px;font-size:6.4px;line-height:9px;color:#5e5e5e;transform-origin:0 50%;transform:scaleX(0.823);">Cell ID</div>
<div class="t" style="left:421.7px;top:292.2px;font-size:6.3px;line-height:9px;color:#5e5e5e;transform-origin:0 50%;transform:scaleX(0.85);">1</div>
<div class="t" style="left:462.1px;top:292.2px;font-size:6.3px;line-height:9px;color:#5e5e5e;transform-origin:0 50%;transform:scaleX(0.85);">2</div>
<div class="t" style="left:501.3px;top:292.2px;font-size:6.3px;line-height:9px;color:#5e5e5e;transform-origin:0 50%;transform:scaleX(0.85);">3</div>
<div class="t" style="left:540.8px;top:292.2px;font-size:6.3px;line-height:9px;color:#5e5e5e;transform-origin:0 50%;transform:scaleX(0.85);">4</div>
<div style="position:absolute;left:300.5px;top:301.82px;width:6px;height:7.819999999999999px;background:linear-gradient(#f6f6f6,#e2e2e2);border:1px solid #e0e0e0;"></div>
<div style="position:absolute;left:300.0px;top:309.73999999999995px;width:260.5px;height:1px;background:#e6ebf0;"></div>
<div class="t" style="left:308.5px;top:301.2px;font-size:6.4px;line-height:9px;color:#5e5e5e;transform-origin:0 50%;transform:scaleX(0.823);">Carrier Offset</div>
<div class="t" style="left:421.7px;top:301.2px;font-size:6.3px;line-height:9px;color:#5e5e5e;transform-origin:0 50%;transform:scaleX(0.85);">-349.860 MHz</div>
<div class="t" style="left:462.1px;top:301.2px;font-size:6.3px;line-height:9px;color:#5e5e5e;transform-origin:0 50%;transform:scaleX(0.85);">-249.930 MHz</div>
<div class="t" style="left:501.3px;top:301.2px;font-size:6.3px;line-height:9px;color:#5e5e5e;transform-origin:0 50%;transform:scaleX(0.85);">-149.940 MHz</div>
<div class="t" style="left:540.8px;top:301.2px;font-size:6.3px;line-height:9px;color:#5e5e5e;transform-origin:0 50%;transform:scaleX(0.85);">-49.980</div>
<div style="position:absolute;left:300.5px;top:310.84000000000003px;width:6px;height:7.819999999999999px;background:linear-gradient(#f6f6f6,#e2e2e2);border:1px solid #e0e0e0;"></div>
<div style="position:absolute;left:300.0px;top:318.76px;width:260.5px;height:1px;background:#e6ebf0;"></div>
<div class="t" style="left:308.5px;top:310.2px;font-size:6.4px;line-height:9px;color:#5e5e5e;transform-origin:0 50%;transform:scaleX(0.823);">Composite RMS EVM Mean</div>
<div class="t" style="left:421.7px;top:310.2px;font-size:6.3px;line-height:9px;color:#5e5e5e;transform-origin:0 50%;transform:scaleX(0.85);">1.298 %</div>
<div class="t" style="left:462.1px;top:310.2px;font-size:6.3px;line-height:9px;color:#5e5e5e;transform-origin:0 50%;transform:scaleX(0.85);">1.263 %</div>
<div class="t" style="left:501.3px;top:310.2px;font-size:6.3px;line-height:9px;color:#5e5e5e;transform-origin:0 50%;transform:scaleX(0.85);">1.220 %</div>
<div class="t" style="left:540.8px;top:310.2px;font-size:6.3px;line-height:9px;color:#5e5e5e;transform-origin:0 50%;transform:scaleX(0.85);">1.357 %</div>
<div style="position:absolute;left:300.5px;top:319.86px;width:6px;height:7.819999999999999px;background:linear-gradient(#f6f6f6,#e2e2e2);border:1px solid #e0e0e0;"></div>
<div style="position:absolute;left:300.0px;top:327.78px;width:260.5px;height:1px;background:#e6ebf0;"></div>
<div class="t" style="left:308.5px;top:319.3px;font-size:6.4px;line-height:9px;color:#5e5e5e;transform-origin:0 50%;transform:scaleX(0.823);">Composite Peak EVM Maximum</div>
<div class="t" style="left:421.7px;top:319.3px;font-size:6.3px;line-height:9px;color:#5e5e5e;transform-origin:0 50%;transform:scaleX(0.85);">5.091 %</div>
<div class="t" style="left:462.1px;top:319.3px;font-size:6.3px;line-height:9px;color:#5e5e5e;transform-origin:0 50%;transform:scaleX(0.85);">17.195 %</div>
<div class="t" style="left:501.3px;top:319.3px;font-size:6.3px;line-height:9px;color:#5e5e5e;transform-origin:0 50%;transform:scaleX(0.85);">4.014 %</div>
<div class="t" style="left:540.8px;top:319.3px;font-size:6.3px;line-height:9px;color:#5e5e5e;transform-origin:0 50%;transform:scaleX(0.85);">20.542 %</div>
<div style="position:absolute;left:300.5px;top:328.88px;width:6px;height:7.819999999999999px;background:linear-gradient(#f6f6f6,#e2e2e2);border:1px solid #e0e0e0;"></div>
<div style="position:absolute;left:300.0px;top:336.79999999999995px;width:260.5px;height:1px;background:#e6ebf0;"></div>
<div class="t" style="left:308.5px;top:328.3px;font-size:6.4px;line-height:9px;color:#5e5e5e;transform-origin:0 50%;transform:scaleX(0.823);">Composite Peak EVM Slot Index</div>
<div class="t" style="left:421.7px;top:328.3px;font-size:6.3px;line-height:9px;color:#5e5e5e;transform-origin:0 50%;transform:scaleX(0.85);">0</div>
<div class="t" style="left:462.1px;top:328.3px;font-size:6.3px;line-height:9px;color:#5e5e5e;transform-origin:0 50%;transform:scaleX(0.85);">0</div>
<div class="t" style="left:501.3px;top:328.3px;font-size:6.3px;line-height:9px;color:#5e5e5e;transform-origin:0 50%;transform:scaleX(0.85);">0</div>
<div class="t" style="left:540.8px;top:328.3px;font-size:6.3px;line-height:9px;color:#5e5e5e;transform-origin:0 50%;transform:scaleX(0.85);">0</div>
<div style="position:absolute;left:300.5px;top:337.9px;width:6px;height:7.819999999999999px;background:linear-gradient(#f6f6f6,#e2e2e2);border:1px solid #e0e0e0;"></div>
<div style="position:absolute;left:300.0px;top:345.81999999999994px;width:260.5px;height:1px;background:#e6ebf0;"></div>
<div class="t" style="left:308.5px;top:337.3px;font-size:6.4px;line-height:9px;color:#5e5e5e;transform-origin:0 50%;transform:scaleX(0.823);">Composite Peak EVM Symbol Index</div>
<div class="t" style="left:421.7px;top:337.3px;font-size:6.3px;line-height:9px;color:#5e5e5e;transform-origin:0 50%;transform:scaleX(0.85);">3</div>
<div class="t" style="left:462.1px;top:337.3px;font-size:6.3px;line-height:9px;color:#5e5e5e;transform-origin:0 50%;transform:scaleX(0.85);">11</div>
<div class="t" style="left:501.3px;top:337.3px;font-size:6.3px;line-height:9px;color:#5e5e5e;transform-origin:0 50%;transform:scaleX(0.85);">7</div>
<div class="t" style="left:540.8px;top:337.3px;font-size:6.3px;line-height:9px;color:#5e5e5e;transform-origin:0 50%;transform:scaleX(0.85);">1</div>
<div style="position:absolute;left:300.5px;top:346.92px;width:6px;height:7.819999999999999px;background:linear-gradient(#f6f6f6,#e2e2e2);border:1px solid #e0e0e0;"></div>
<div style="position:absolute;left:300.0px;top:354.84px;width:260.5px;height:1px;background:#e6ebf0;"></div>
<div class="t" style="left:308.5px;top:346.3px;font-size:6.4px;line-height:9px;color:#5e5e5e;transform-origin:0 50%;transform:scaleX(0.823);">Composite Peak EVM Subcarrier Index</div>
<div class="t" style="left:421.7px;top:346.3px;font-size:6.3px;line-height:9px;color:#5e5e5e;transform-origin:0 50%;transform:scaleX(0.85);">2724</div>
<div class="t" style="left:462.1px;top:346.3px;font-size:6.3px;line-height:9px;color:#5e5e5e;transform-origin:0 50%;transform:scaleX(0.85);">1895</div>
<div class="t" style="left:501.3px;top:346.3px;font-size:6.3px;line-height:9px;color:#5e5e5e;transform-origin:0 50%;transform:scaleX(0.85);">2422</div>
<div class="t" style="left:540.8px;top:346.3px;font-size:6.3px;line-height:9px;color:#5e5e5e;transform-origin:0 50%;transform:scaleX(0.85);">1742</div>
<div style="position:absolute;left:300.5px;top:355.94px;width:6px;height:7.819999999999999px;background:linear-gradient(#f6f6f6,#e2e2e2);border:1px solid #e0e0e0;"></div>
<div style="position:absolute;left:300.0px;top:363.85999999999996px;width:260.5px;height:1px;background:#e6ebf0;"></div>
<div class="t" style="left:308.5px;top:355.3px;font-size:6.4px;line-height:9px;color:#5e5e5e;transform-origin:0 50%;transform:scaleX(0.823);">Component Carrier Frequency Mean Error</div>
<div class="t" style="left:421.7px;top:355.3px;font-size:6.3px;line-height:9px;color:#5e5e5e;transform-origin:0 50%;transform:scaleX(0.85);">148.586 Hz</div>
<div class="t" style="left:462.1px;top:355.3px;font-size:6.3px;line-height:9px;color:#5e5e5e;transform-origin:0 50%;transform:scaleX(0.85);">157.946 Hz</div>
<div class="t" style="left:501.3px;top:355.3px;font-size:6.3px;line-height:9px;color:#5e5e5e;transform-origin:0 50%;transform:scaleX(0.85);">166.262 Hz</div>
<div class="t" style="left:540.8px;top:355.3px;font-size:6.3px;line-height:9px;color:#5e5e5e;transform-origin:0 50%;transform:scaleX(0.85);">175.712</div>
<div style="position:absolute;left:300.5px;top:364.96000000000004px;width:6px;height:7.819999999999999px;background:linear-gradient(#f6f6f6,#e2e2e2);border:1px solid #e0e0e0;"></div>
<div style="position:absolute;left:300.0px;top:372.88px;width:260.5px;height:1px;background:#e6ebf0;"></div>
<div class="t" style="left:308.5px;top:364.4px;font-size:6.4px;line-height:9px;color:#5e5e5e;transform-origin:0 50%;transform:scaleX(0.823);">Component Carrier IQ Origin Offset Mean</div>
<div class="t" style="left:421.7px;top:364.4px;font-size:6.3px;line-height:9px;color:#5e5e5e;transform-origin:0 50%;transform:scaleX(0.85);">-67.445 dBc</div>
<div class="t" style="left:462.1px;top:364.4px;font-size:6.3px;line-height:9px;color:#5e5e5e;transform-origin:0 50%;transform:scaleX(0.85);">-70.393 dBc</div>
<div class="t" style="left:501.3px;top:364.4px;font-size:6.3px;line-height:9px;color:#5e5e5e;transform-origin:0 50%;transform:scaleX(0.85);">-70.451 dBc</div>
<div class="t" style="left:540.8px;top:364.4px;font-size:6.3px;line-height:9px;color:#5e5e5e;transform-origin:0 50%;transform:scaleX(0.85);">-74.553</div>
<div style="position:absolute;left:300.5px;top:373.98px;width:6px;height:7.819999999999999px;background:linear-gradient(#f6f6f6,#e2e2e2);border:1px solid #e0e0e0;"></div>
<div style="position:absolute;left:300.0px;top:381.9px;width:260.5px;height:1px;background:#e6ebf0;"></div>
<div class="t" style="left:308.5px;top:373.4px;font-size:6.4px;line-height:9px;color:#5e5e5e;transform-origin:0 50%;transform:scaleX(0.823);">Component Carrier IQ Gain Imbalance Mean</div>
<div class="t" style="left:421.7px;top:373.4px;font-size:6.3px;line-height:9px;color:#5e5e5e;transform-origin:0 50%;transform:scaleX(0.85);">0.015 dB</div>
<div class="t" style="left:462.1px;top:373.4px;font-size:6.3px;line-height:9px;color:#5e5e5e;transform-origin:0 50%;transform:scaleX(0.85);">-0.005 dB</div>
<div class="t" style="left:501.3px;top:373.4px;font-size:6.3px;line-height:9px;color:#5e5e5e;transform-origin:0 50%;transform:scaleX(0.85);">0.089 dB</div>
<div class="t" style="left:540.8px;top:373.4px;font-size:6.3px;line-height:9px;color:#5e5e5e;transform-origin:0 50%;transform:scaleX(0.85);">-0.004 d</div>
<div style="position:absolute;left:300.5px;top:383.0px;width:6px;height:7.819999999999999px;background:linear-gradient(#f6f6f6,#e2e2e2);border:1px solid #e0e0e0;"></div>
<div style="position:absolute;left:300.0px;top:390.91999999999996px;width:260.5px;height:1px;background:#e6ebf0;"></div>
<div class="t" style="left:308.5px;top:382.4px;font-size:6.4px;line-height:9px;color:#5e5e5e;transform-origin:0 50%;transform:scaleX(0.823);">Component Carrier IQ Quadrature Error Mean</div>
<div class="t" style="left:421.7px;top:382.4px;font-size:6.3px;line-height:9px;color:#5e5e5e;transform-origin:0 50%;transform:scaleX(0.85);">0.169 °</div>
<div class="t" style="left:462.1px;top:382.4px;font-size:6.3px;line-height:9px;color:#5e5e5e;transform-origin:0 50%;transform:scaleX(0.85);">0.021 °</div>
<div class="t" style="left:501.3px;top:382.4px;font-size:6.3px;line-height:9px;color:#5e5e5e;transform-origin:0 50%;transform:scaleX(0.85);">0.082 °</div>
<div class="t" style="left:540.8px;top:382.4px;font-size:6.3px;line-height:9px;color:#5e5e5e;transform-origin:0 50%;transform:scaleX(0.85);">0.062 °</div>
<svg style="position:absolute;left:301px;top:294.5px;" width="4" height="5" viewBox="0 0 4 5"><path d="M0.5 0.5 L3 2.5 L0.5 4.5 Z" fill="#3a7fd0"/></svg>
<div style="position:absolute;left:563.5px;top:269px;width:1.5px;height:161px;background:#cfe0f0;"></div>
<div style="position:absolute;left:299.5px;top:420.5px;width:261.5px;height:6.5px;background:#f6f9fc;border:1px solid #b3cde8;"></div>
<div style="position:absolute;left:306px;top:421px;width:110px;height:5.5px;background:linear-gradient(#fafafa,#e4e4e4);border:1px solid #a9c2dc;"></div>
<div style="position:absolute;left:555px;top:421px;width:5.5px;height:5.5px;background:#eef3f8;border:1px solid #b3cde8;"></div>
<svg style="position:absolute;left:301px;top:421.5px;" width="5" height="5" viewBox="0 0 5 5"><path d="M3.5 0.5 L1 2.5 L3.5 4.5" stroke="#557" fill="none" stroke-width="0.8"/></svg>
<svg style="position:absolute;left:359px;top:422.5px;" width="4" height="3" viewBox="0 0 4 3"><circle cx="2" cy="1.5" r="1" fill="#557"/></svg>
<svg style="position:absolute;left:612px;top:258.5px;" width="6" height="4" viewBox="0 0 6 4"><path d="M0.5 0.5 L3 3 L5.5 0.5" stroke="#6a8fb8" fill="none" stroke-width="1"/></svg>
<div class="t" style="left:619px;top:255.8px;font-size:6.8px;line-height:10px;color:#5e5e5e;transform-origin:0 50%;transform:scaleX(0.78);">Trace 1</div>
<div style="position:absolute;left:658px;top:256.8px;width:6.5px;height:6.5px;background:linear-gradient(#dbe9f7,#a9c8e8);border:1px solid #7aa6d6;"></div>
<div class="t" style="left:667px;top:255.5px;font-size:6.6px;line-height:10px;color:#666;transform-origin:0 50%;transform:scaleX(0.85);">Show</div>
<div class="t" style="left:684px;top:255.5px;font-size:6.6px;line-height:10px;color:#5e5e5e;transform-origin:0 50%;transform:scaleX(0.85);">+Peak Normal</div>
<div style="position:absolute;left:826px;top:256.3px;width:17px;height:8.300000000000011px;background:linear-gradient(#fbfbfb,#e4e4e4);border:1px solid #9fb8d6;border-radius:1px;"></div>
<div class="t" style="left:774.5px;width:120px;text-align:center;top:256.0px;font-size:6.3px;line-height:9px;color:#333;transform-origin:50% 50%;transform:scaleX(0.85);">Clear</div>
<svg style="position:absolute;left:571.5px;top:267px;" width="4" height="4" viewBox="0 0 4 4"><path d="M0 0 L4 2 L0 4 Z" fill="#5e5e5e"/></svg>
<div class="t" style="left:578px;top:264.0px;font-size:6.8px;line-height:10px;color:#5e5e5e;transform-origin:0 50%;transform:scaleX(0.85);">0.00</div>
<div style="position:absolute;left:577px;top:275.5px;width:30.799999999999955px;height:8.100000000000023px;background:#fff;border:1px solid #d6d6d6;"></div>
<div class="t" style="left:581px;top:274.6px;font-size:6.5px;line-height:10px;color:#444;transform-origin:0 50%;transform:scaleX(0.85);">dBm</div>
<div style="position:absolute;left:600.8px;top:276.5px;width:6px;height:6.100000000000023px;background:linear-gradient(#d9e8f7,#a9c9ea);border:1px solid #8db3dc;"></div>
<svg style="position:absolute;left:571.5px;top:298.5px;" width="4" height="4" viewBox="0 0 4 4"><path d="M0 0 L4 2 L0 4 Z" fill="#888"/></svg>
<div class="t" style="left:577px;top:292.0px;font-size:6.5px;line-height:10px;color:#5e5e5e;transform-origin:0 50%;transform:scaleX(0.85);">dB/div:</div>
<div class="t" style="left:579px;top:299.0px;font-size:6.6px;line-height:10px;color:#5e5e5e;transform-origin:0 50%;transform:scaleX(0.85);">10.0 dB</div>
<svg style="position:absolute;left:571.5px;top:316px;" width="4" height="4" viewBox="0 0 4 4"><path d="M0 0 L4 2 L0 4 Z" fill="#575"/></svg>
<div class="t" style="left:577px;top:309.3px;font-size:6.5px;line-height:10px;color:#5e5e5e;transform-origin:0 50%;transform:scaleX(0.85);">RBW:</div>
<div class="t" style="left:579px;top:316.0px;font-size:6.5px;line-height:10px;color:#5e5e5e;transform-origin:0 50%;transform:scaleX(0.85);font-style:italic;">1.00 MHz</div>
<div style="position:absolute;left:574px;top:326.8px;width:5.8px;height:6.5px;background:#fff;border:1px solid #8fb0d8;"></div>
<div class="t" style="left:583px;top:325.0px;font-size:6.5px;line-height:10px;color:#5e5e5e;transform-origin:0 50%;transform:scaleX(0.85);">VBW:</div>
<div class="t" style="left:574px;top:345.0px;font-size:6.6px;line-height:10px;color:#5e5e5e;transform-origin:0 50%;transform:scaleX(0.85);">Segments:</div>
<div class="t" style="left:576px;top:352.3px;font-size:6.6px;line-height:10px;color:#5e5e5e;transform-origin:0 50%;transform:scaleX(0.85);">21</div>
<div class="t" style="right:237.70000000000005px;top:262.9px;font-size:6.3px;line-height:9px;color:#5e5e5e;text-align:right;transform-origin:100% 50%;transform:scaleX(0.85);">0.0</div>
<div style="position:absolute;left:627.8px;top:267px;width:1.5px;height:1px;background:#888;"></div>
<div class="t" style="right:237.70000000000005px;top:278.2px;font-size:6.3px;line-height:9px;color:#5e5e5e;text-align:right;transform-origin:100% 50%;transform:scaleX(0.85);">-10.0</div>
<div style="position:absolute;left:627.8px;top:283px;width:1.5px;height:1px;background:#888;"></div>
<div class="t" style="right:237.70000000000005px;top:293.5px;font-size:6.3px;line-height:9px;color:#5e5e5e;text-align:right;transform-origin:100% 50%;transform:scaleX(0.85);">-20.0</div>
<div style="position:absolute;left:627.8px;top:298px;width:1.5px;height:1px;background:#888;"></div>
<div class="t" style="right:237.70000000000005px;top:308.7px;font-size:6.3px;line-height:9px;color:#5e5e5e;text-align:right;transform-origin:100% 50%;transform:scaleX(0.85);">-30.0</div>
<div style="position:absolute;left:627.8px;top:313px;width:1.5px;height:1px;background:#888;"></div>
<div class="t" style="right:237.70000000000005px;top:324.0px;font-size:6.3px;line-height:9px;color:#5e5e5e;text-align:right;transform-origin:100% 50%;transform:scaleX(0.85);">-40.0</div>
<div style="position:absolute;left:627.8px;top:329px;width:1.5px;height:1px;background:#888;"></div>
<div class="t" style="right:237.70000000000005px;top:339.3px;font-size:6.3px;line-height:9px;color:#5e5e5e;text-align:right;transform-origin:100% 50%;transform:scaleX(0.85);">-50.0</div>
<div style="position:absolute;left:627.8px;top:344px;width:1.5px;height:1px;background:#888;"></div>
<div class="t" style="right:237.70000000000005px;top:354.6px;font-size:6.3px;line-height:9px;color:#5e5e5e;text-align:right;transform-origin:100% 50%;transform:scaleX(0.85);">-60.0</div>
<div style="position:absolute;left:627.8px;top:359px;width:1.5px;height:1px;background:#888;"></div>
<div class="t" style="right:237.70000000000005px;top:369.9px;font-size:6.3px;line-height:9px;color:#5e5e5e;text-align:right;transform-origin:100% 50%;transform:scaleX(0.85);">-70.0</div>
<div style="position:absolute;left:627.8px;top:374px;width:1.5px;height:1px;background:#888;"></div>
<div class="t" style="right:237.70000000000005px;top:385.1px;font-size:6.3px;line-height:9px;color:#5e5e5e;text-align:right;transform-origin:100% 50%;transform:scaleX(0.85);">-80.0</div>
<div style="position:absolute;left:627.8px;top:390px;width:1.5px;height:1px;background:#888;"></div>
<div class="t" style="right:237.70000000000005px;top:400.4px;font-size:6.3px;line-height:9px;color:#5e5e5e;text-align:right;transform-origin:100% 50%;transform:scaleX(0.85);">-90.0</div>
<div style="position:absolute;left:627.8px;top:405px;width:1.5px;height:1px;background:#888;"></div>
<div class="t" style="right:237.70000000000005px;top:415.7px;font-size:6.3px;line-height:9px;color:#5e5e5e;text-align:right;transform-origin:100% 50%;transform:scaleX(0.85);">-100.0</div>
<div style="position:absolute;left:627.8px;top:420px;width:1.5px;height:1px;background:#888;"></div>
<svg style="position:absolute;left:630.6px;top:265.8px;" width="208.7" height="155" viewBox="0 0 208.7 155"><rect width="100%" height="100%" fill="#000"/><path d="M21.90 0 V155" stroke="#606060" stroke-width="1"/><path d="M42.90 0 V155" stroke="#606060" stroke-width="1"/><path d="M62.90 0 V155" stroke="#606060" stroke-width="1"/><path d="M83.90 0 V155" stroke="#606060" stroke-width="1"/><path d="M104.90 0 V155" stroke="#606060" stroke-width="1"/><path d="M125.90 0 V155" stroke="#606060" stroke-width="1"/><path d="M146.90 0 V155" stroke="#606060" stroke-width="1"/><path d="M167.90 0 V155" stroke="#606060" stroke-width="1"/><path d="M187.90 0 V155" stroke="#606060" stroke-width="1"/><path d="M0 16.70 H208.7" stroke="#606060" stroke-width="1"/><path d="M0 31.70 H208.7" stroke="#606060" stroke-width="1"/><path d="M0 47.70 H208.7" stroke="#606060" stroke-width="1"/><path d="M0 62.70 H208.7" stroke="#606060" stroke-width="1"/><path d="M0 77.70 H208.7" stroke="#606060" stroke-width="1"/><path d="M0 93.70 H208.7" stroke="#606060" stroke-width="1"/><path d="M0 108.70 H208.7" stroke="#606060" stroke-width="1"/><path d="M0 124.70 H208.7" stroke="#606060" stroke-width="1"/><path d="M0 139.70 H208.7" stroke="#606060" stroke-width="1"/><path d="M0.0 112.7 L0.9 112.3 L1.8 112.5 L2.7 111.7 L3.6 111.4 L4.5 113.7 L5.4 112.2 L6.3 111.6 L7.2 112.8 L8.1 113.2 L9.0 111.7 L9.9 112.7 L10.8 112.1 L11.7 112.5 L12.6 111.3 L13.5 111.4 L14.4 113.7 L15.3 113.4 L16.2 112.5 L17.1 112.7 L18.0 111.9 L18.9 113.2 L12.3 112.0 L12.8 87.5 L13.3 111.5 L19.5 111.0 L20.3 110.0 L21.0 55.5 L21.5 55.3 L22.3 56.2 L23.1 56.7 L23.9 54.2 L24.7 54.6 L25.5 54.2 L26.3 56.4 L27.1 56.6 L27.9 54.2 L28.7 55.1 L29.5 56.5 L30.3 55.5 L31.1 56.5 L31.9 55.0 L32.7 54.4 L33.5 56.6 L34.3 54.1 L35.1 54.9 L35.9 56.3 L36.7 54.1 L37.5 55.8 L38.3 56.5 L39.1 54.3 L39.9 56.3 L40.7 54.7 L41.5 60.3 L42.3 54.5 L43.1 55.1 L43.9 54.5 L44.7 53.0 L45.5 51.4 L46.3 54.4 L47.1 56.1 L47.9 54.2 L48.7 54.0 L49.5 56.0 L50.3 55.0 L51.1 55.9 L51.9 55.4 L52.7 54.3 L53.5 55.6 L54.3 54.1 L55.1 54.4 L55.9 54.1 L56.7 55.9 L57.5 54.1 L58.3 54.5 L59.1 54.0 L59.9 53.8 L60.7 55.4 L61.5 54.9 L62.3 60.6 L63.1 56.2 L63.9 56.1 L64.7 54.4 L65.5 53.8 L66.3 54.4 L67.1 53.7 L67.9 54.5 L68.7 53.6 L69.5 55.0 L70.3 54.7 L71.1 54.2 L71.9 53.9 L72.7 55.6 L73.5 54.1 L74.3 53.8 L75.1 54.9 L75.9 54.1 L76.7 55.4 L77.5 55.1 L78.3 53.7 L79.1 54.6 L79.9 53.7 L80.7 54.4 L81.5 55.8 L82.3 53.6 L83.1 62.6 L83.9 54.0 L84.7 54.5 L85.5 54.5 L86.3 53.5 L87.1 54.7 L87.9 53.8 L88.7 55.6 L89.5 54.3 L90.3 54.5 L91.1 53.7 L91.9 56.0 L92.7 54.8 L93.5 52.0 L94.3 54.1 L95.1 53.8 L95.9 54.0 L96.7 55.3 L97.5 53.5 L98.3 55.0 L99.1 55.3 L99.9 55.8 L100.7 53.6 L101.5 54.8 L102.3 54.2 L103.1 54.6 L103.9 62.6 L104.7 55.0 L105.5 53.9 L106.3 55.9 L107.1 54.6 L107.9 54.9 L108.7 56.0 L109.5 54.4 L110.3 54.4 L111.1 56.1 L111.9 55.9 L112.7 55.7 L113.5 54.9 L114.3 56.0 L115.1 54.6 L115.9 54.5 L116.7 53.7 L117.5 53.1 L118.3 56.1 L119.1 56.0 L119.9 55.6 L120.7 53.4 L121.5 54.2 L122.3 54.3 L123.1 56.0 L123.9 54.2 L124.7 62.9 L125.5 54.4 L126.3 53.9 L127.1 56.1 L127.9 54.3 L128.7 55.0 L129.5 53.9 L130.3 54.4 L131.1 54.4 L131.9 53.8 L132.7 55.8 L133.5 55.1 L134.3 54.2 L135.1 54.8 L135.9 55.2 L136.7 54.5 L137.5 54.2 L138.3 54.7 L139.1 53.7 L139.9 55.9 L140.7 55.1 L141.5 54.4 L142.3 54.5 L143.1 54.1 L143.9 56.0 L144.7 53.9 L145.5 62.2 L146.3 54.3 L147.1 55.7 L147.9 54.6 L148.7 55.5 L149.5 56.0 L150.3 55.1 L151.1 55.7 L151.9 55.0 L152.7 55.7 L153.5 54.1 L154.3 53.8 L155.1 55.4 L155.9 56.4 L156.7 54.9 L157.5 56.1 L158.3 54.9 L159.1 55.1 L159.9 54.7 L160.7 55.4 L161.5 54.8 L162.3 56.1 L163.1 55.1 L163.9 54.7 L164.7 55.5 L165.5 54.2 L166.3 62.5 L167.1 56.5 L167.9 55.1 L168.7 51.7 L169.5 55.3 L170.3 56.1 L171.1 56.7 L171.9 55.4 L172.7 55.1 L173.5 55.6 L174.3 56.6 L175.1 55.5 L175.9 55.1 L176.7 55.6 L177.5 56.5 L178.3 55.4 L179.1 55.8 L179.9 55.1 L180.7 56.3 L181.5 55.1 L182.3 56.4 L183.1 54.6 L183.9 56.1 L184.7 56.9 L185.5 55.4 L186.3 55.1 L187.2 59.0 L187.6 112.5 L189.0 112.8 L189.9 112.1 L190.8 112.0 L191.7 113.1 L192.6 113.0 L193.5 112.4 L194.4 114.0 L195.3 113.1 L196.2 111.7 L197.1 112.6 L198.0 113.5 L198.9 112.3 L199.8 113.3 L200.7 111.6 L201.6 112.3 L202.5 113.6 L203.4 113.0 L204.3 113.2 L205.2 112.1 L206.1 112.8 L207.0 112.9 L207.9 112.2" stroke="#e0d820" stroke-width="1" fill="none"/><path d="M102.5 151 L104 153.5 L105.5 151" stroke="#aaa" stroke-width="0.7" fill="none"/></svg>
<div style="position:absolute;left:588px;top:329.4px;width:75.5px;height:9.2px;background:rgba(150,165,180,0.1);"></div>
<div style="position:absolute;left:573.8px;top:425px;width:31.0px;height:7.5px;background:linear-gradient(#fbfbfb,#e4e4e4);border:1px solid #9fb8d6;border-radius:1px;"></div>
<div class="t" style="left:529.3px;width:120px;text-align:center;top:423.8px;font-size:6.5px;line-height:10px;color:#5a5a66;transform-origin:50% 50%;transform:scaleX(0.85);">Autoscale</div>
<svg style="position:absolute;left:632.5px;top:426.3px;" width="4" height="4" viewBox="0 0 4 4"><path d="M0 0 L4 2 L0 4 Z" fill="#575"/></svg>
<div class="t" style="left:639px;top:423.3px;font-size:6.6px;line-height:10px;color:#5e5e5e;transform-origin:0 50%;transform:scaleX(0.85);">CF&nbsp; 2.00000 GHz</div>
<svg style="position:absolute;left:785px;top:426.3px;" width="4" height="4" viewBox="0 0 4 4"><path d="M0 0 L4 2 L0 4 Z" fill="#575"/></svg>
<div class="t" style="left:792px;top:423.3px;font-size:6.6px;line-height:10px;color:#5e5e5e;transform-origin:0 50%;transform:scaleX(0.85);">Span&nbsp; 1.000 GHz</div>
<div style="position:absolute;left:14px;top:436px;width:834px;height:16.5px;background:#fcfcfc;"></div>
<div style="position:absolute;left:14px;top:452.3px;width:834px;height:13.7px;background:linear-gradient(#fdfdfd,#ececec);border:1px solid #a9c8e8;"></div>
<div style="position:absolute;left:14px;top:466px;width:834px;height:3px;background:#1c1c1c;"></div>
<div class="t" style="left:15px;top:476.5px;font-size:12.8px;line-height:16px;color:#34466e;font-style:italic;-webkit-text-stroke:0.15px #34466e;transform:scaleX(0.847);transform-origin:0 50%;">Constellation, Summary View, CHP and SEM displays supported in option 5GNR</div>
<div class="t" style="left:15.2px;top:439.8px;font-size:7px;line-height:10px;color:#3e3e3e;transform-origin:0 50%;transform:scaleX(0.85);">NR CH Power</div>
<div class="t" style="left:64.2px;top:439.8px;font-size:7px;line-height:10px;color:#3e3e3e;transform-origin:0 50%;transform:scaleX(0.85);">Frequency</div>
<div style="position:absolute;left:96px;top:439.8px;width:40.80000000000001px;height:9.800000000000011px;background:#fff;border:1px solid #d0d0d0;"></div>
<div class="t" style="left:98px;top:439.7px;font-size:6.8px;line-height:10px;color:#5e5e5e;transform-origin:0 50%;transform:scaleX(0.85);">2.00000 GHz</div>
<div class="t" style="left:281px;top:439.8px;font-size:7px;line-height:10px;color:#3e3e3e;transform-origin:0 50%;transform:scaleX(0.85);">Ref Lev</div>
<div style="position:absolute;left:305.8px;top:439.5px;width:40.0px;height:10.0px;background:#fff;border:1px solid #d0d0d0;"></div>
<div class="t" style="left:307.8px;top:439.5px;font-size:6.8px;line-height:10px;color:#5e5e5e;transform-origin:0 50%;transform:scaleX(0.85);">0.00 dBm</div>
<div style="position:absolute;left:780.3px;top:439.2px;width:26.40000000000009px;height:10.400000000000034px;background:linear-gradient(#f4f8fc,#dbe7f3);border:1px solid #9fbfe0;border-radius:1px;"></div>
<div class="t" style="left:733.5px;width:120px;text-align:center;top:439.4px;font-size:6.8px;line-height:10px;color:#444;transform-origin:50% 50%;transform:scaleX(0.85);">Markers</div>
<div style="position:absolute;left:809px;top:439.2px;width:22px;height:10.400000000000034px;background:linear-gradient(#f4f8fc,#dbe7f3);border:1px solid #9fbfe0;border-radius:1px;"></div>
<div class="t" style="left:760.0px;width:120px;text-align:center;top:439.4px;font-size:6.8px;line-height:10px;color:#444;transform-origin:50% 50%;transform:scaleX(0.85);">Traces</div>
<div style="position:absolute;left:832.6px;top:438.8px;width:12.5px;height:12px;background:#eef4fa;border:1px solid #bcd4ec;border-radius:1px;"></div>
<svg style="position:absolute;left:833px;top:439px;" width="12" height="11" viewBox="0 0 12 11"><g transform="translate(6,5.5)"><circle r="3" fill="none" stroke="#111" stroke-width="2.4"/><g stroke="#111" stroke-width="2"><path d="M0 -5 V5 M-5 0 H5 M-3.5 -3.5 L3.5 3.5 M-3.5 3.5 L3.5 -3.5"/></g><circle r="1.6" fill="#fff"/></g></svg>
<div style="position:absolute;left:56.9px;top:453px;width:1px;height:12.5px;background:#d4dde6;"></div>
<div style="position:absolute;left:177.9px;top:453px;width:1px;height:12.5px;background:#d4dde6;"></div>
<div style="position:absolute;left:206.6px;top:453px;width:1px;height:12.5px;background:#d4dde6;"></div>
<div style="position:absolute;left:252.3px;top:453px;width:1px;height:12.5px;background:#d4dde6;"></div>
<div style="position:absolute;left:283.6px;top:453px;width:1px;height:12.5px;background:#d4dde6;"></div>
<div style="position:absolute;left:317.5px;top:453px;width:1px;height:12.5px;background:#d4dde6;"></div>
<div style="position:absolute;left:352.5px;top:453px;width:1px;height:12.5px;background:#d4dde6;"></div>
<div style="position:absolute;left:375.7px;top:453px;width:1px;height:12.5px;background:#d4dde6;"></div>
<div class="t" style="left:18px;top:454.1px;font-size:5.8px;line-height:9px;color:#444;transform-origin:0 50%;transform:scaleX(0.8);font-weight:bold;">Stopped</div>
<div class="t" style="left:59.5px;top:454.1px;font-size:5.8px;line-height:9px;color:#555;transform-origin:0 50%;transform:scaleX(0.8);font-weight:bold;">Call ID Detected</div>
<svg style="position:absolute;left:835px;top:454px;" width="9" height="9" viewBox="0 0 9 9"><path d="M2 7 L7 2" stroke="#803020" stroke-width="0.8"/><circle cx="2.8" cy="6.2" r="1.7" fill="#d8401c"/><circle cx="6.4" cy="2.6" r="1.5" fill="#d8401c"/></svg>
<div style="position:absolute;left:397px;top:466px;width:21px;height:2px;background:#777;"></div>
</div></body></html>
